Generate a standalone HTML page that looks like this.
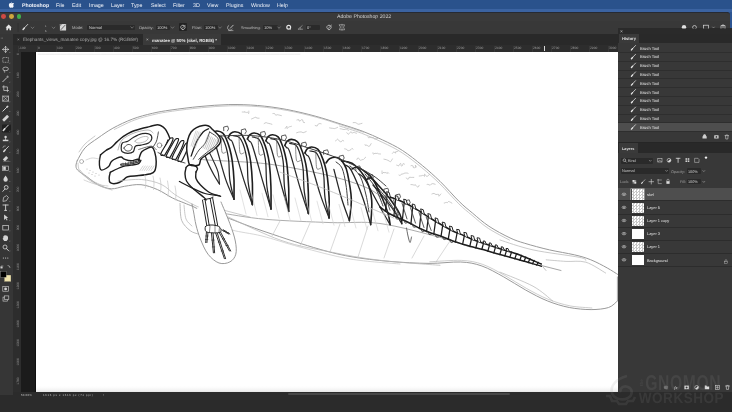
<!DOCTYPE html>
<html><head><meta charset="utf-8">
<style>
*{margin:0;padding:0;box-sizing:border-box}
html,body{width:732px;height:412px;overflow:hidden;background:#2b2b2b;font-family:"Liberation Sans",sans-serif;text-rendering:geometricPrecision}
.a{position:absolute}
.t{position:absolute;white-space:nowrap;will-change:transform}
.ck{background:conic-gradient(#c8c8c8 25%,#fff 0 50%,#c8c8c8 0 75%,#fff 0) 0 0/3px 3px}
</style></head>
<body>
<div class="a" style="left:0px;top:0px;width:732px;height:9px;background:#2a528c;"></div>
<div class="a" style="left:0px;top:9px;width:732px;height:3px;background:#3b63a1;"></div>
<div class="a" style="left:728px;top:12px;width:4px;height:17px;background:#2d5592;"></div>
<div class="a" style="left:0px;top:12px;width:729.5px;height:9px;background:#3a3a3a;border-top:1px solid #262a33;border-top-right-radius:3px"></div>
<div class="a" style="left:0px;top:21px;width:729.5px;height:12.5px;background:#383838;"></div>
<div class="a" style="left:0px;top:33.5px;width:13px;height:362px;background:#363636;"></div>
<div class="a" style="left:13px;top:33.5px;width:605px;height:11.5px;background:#292929;"></div>
<div class="a" style="left:143px;top:33.5px;width:78px;height:11.5px;background:#3a3a3a;"></div>
<div class="a" style="left:13px;top:45px;width:605px;height:7px;background:#2d2d2d;"></div>
<div class="a" style="left:13px;top:52px;width:7.5px;height:340px;background:#2d2d2d;"></div>
<div class="a" style="left:20.5px;top:52px;width:15.5px;height:340px;background:#1b1b1b;"></div>
<div class="a" style="left:36px;top:52px;width:582px;height:340px;background:#ffffff;"></div>
<div class="a" style="left:36px;top:52px;width:582px;height:340px;overflow:hidden"><svg class="a" style="left:-36px;top:-52px" width="732" height="412" viewBox="0 0 732 412" stroke-linecap="round" stroke-linejoin="round"><path d="M77.2,160.8C78.5,158.7 81.4,151.8 84.9,148.0C88.4,144.2 93.3,141.3 98.0,138.0C102.7,134.7 107.1,131.4 112.9,128.2C118.7,125.0 126.1,121.5 132.7,119.0C139.3,116.5 146.1,114.8 152.5,113.3C158.9,111.8 163.1,111.1 171.0,110.0C178.9,108.9 190.4,107.4 200.0,106.5C209.6,105.6 219.2,104.8 228.8,104.6C238.4,104.4 247.9,104.7 257.5,105.5C267.1,106.3 276.7,107.6 286.3,109.4C295.9,111.2 306.2,113.7 315.1,116.1C324.1,118.5 332.2,121.3 340.0,123.8C347.8,126.3 354.9,128.3 362.0,131.0C369.1,133.7 375.9,136.8 382.7,140.0C389.4,143.2 395.9,146.2 402.5,150.5C409.1,154.8 416.1,160.4 422.3,165.5C428.6,170.6 433.8,175.3 440.0,181.3C446.2,187.3 453.9,196.3 459.3,201.6C464.7,206.9 467.6,209.0 472.5,213.1C477.4,217.2 482.8,222.2 489.0,226.3C495.2,230.4 504.0,235.1 510.0,237.9C516.0,240.7 518.2,241.3 524.8,243.3C531.4,245.3 541.2,248.0 549.5,249.9C557.8,251.8 567.4,253.2 574.3,254.8C581.2,256.4 585.3,257.6 590.8,259.8C596.3,262.0 602.8,265.5 607.3,268.0C611.8,270.5 616.2,273.5 618.0,274.6" stroke="#9a9a9a" stroke-width="1.0" fill="none"/><path d="M114.4,129.4C117.7,127.9 127.6,122.7 134.2,120.2C140.8,117.7 147.6,116.0 154.0,114.5C160.4,113.0 164.6,112.3 172.5,111.2C180.4,110.1 191.9,108.6 201.5,107.7C211.1,106.8 220.7,106.0 230.3,105.8C239.9,105.6 249.4,105.9 259.0,106.7C268.6,107.5 278.2,108.8 287.8,110.6C297.4,112.4 307.7,114.9 316.6,117.3C325.6,119.7 333.7,122.5 341.5,125.0C349.3,127.5 359.8,131.0 363.5,132.2" stroke="#b8b8b8" stroke-width="0.75" fill="none"/><path d="M77.2,160.8C77.0,161.5 76.0,163.5 76.0,165.0C76.0,166.5 75.8,168.1 77.5,170.0C79.2,171.9 83.1,174.0 86.5,176.4C89.9,178.8 93.9,182.6 98.0,184.7C102.1,186.8 106.9,188.5 111.3,188.8C115.7,189.1 119.5,187.0 124.5,186.3C129.4,185.6 135.5,184.1 141.0,184.7C146.5,185.2 152.3,187.4 157.5,189.6C162.7,191.8 167.9,195.7 172.3,197.9C176.7,200.1 180.6,201.5 183.9,202.8C187.2,204.2 190.7,205.5 192.0,206.0" stroke="#9a9a9a" stroke-width="1.0" fill="none"/><path d="M80.0,170.0C81.3,171.5 84.7,176.3 88.0,179.0C91.3,181.7 96.0,184.2 100.0,186.0C104.0,187.8 110.0,189.3 112.0,190.0" stroke="#b8b8b8" stroke-width="0.75" fill="none"/><circle cx="81.6" cy="161.5" r="2" stroke="#999" stroke-width="0.7" fill="none"/><circle cx="87" cy="169" r="0.5" fill="#aaa"/><circle cx="90" cy="170.5" r="0.5" fill="#aaa"/><circle cx="93" cy="172" r="0.5" fill="#aaa"/><circle cx="96" cy="173.5" r="0.5" fill="#aaa"/><circle cx="99" cy="175" r="0.5" fill="#aaa"/><circle cx="89" cy="173" r="0.5" fill="#aaa"/><circle cx="92" cy="174.5" r="0.5" fill="#aaa"/><circle cx="95" cy="176" r="0.5" fill="#aaa"/><path d="M192.0,206.0C194.2,207.0 200.0,210.3 205.0,212.0C210.0,213.7 212.9,213.0 222.1,216.0C231.3,219.0 244.8,224.8 260.0,230.0C275.2,235.2 298.6,243.1 313.6,247.5C328.6,251.9 337.4,254.2 350.0,256.5C362.6,258.8 376.2,260.2 389.4,261.4C402.6,262.5 417.1,263.3 429.0,263.4C440.9,263.5 451.9,261.6 460.7,262.0C469.5,262.4 474.7,263.5 481.9,266.0C489.1,268.5 496.4,272.9 503.7,276.9C511.0,280.9 518.3,286.0 525.6,290.0C532.9,294.0 540.1,298.0 547.4,300.9C554.7,303.8 562.0,306.1 569.3,307.5C576.6,308.9 584.5,309.6 591.1,309.6C597.7,309.6 604.2,308.9 608.6,307.5C613.0,306.1 615.9,302.0 617.4,300.9" stroke="#9a9a9a" stroke-width="1.0" fill="none"/><path d="M220.0,212.8C227.6,213.9 247.1,217.7 265.6,219.3C284.1,220.9 311.9,221.9 331.0,222.6C350.1,223.3 361.8,221.0 380.0,223.5C398.2,226.0 425.0,233.5 440.0,237.4C455.0,241.3 465.0,245.4 470.0,247.0" stroke="#9a9a9a" stroke-width="0.8125" fill="none"/><path d="M226.0,216.0C235.3,220.1 264.5,234.7 282.0,240.7C299.5,246.7 314.7,248.8 331.0,252.1C347.3,255.4 361.8,258.1 380.0,260.3C398.2,262.5 430.0,264.5 440.0,265.3" stroke="#b8b8b8" stroke-width="0.75" fill="none"/><path d="M272.0,236.0L280.0,221.0" stroke="#c8c8c8" stroke-width="0.6875" fill="none"/><path d="M300.0,246.0L310.0,223.0" stroke="#c8c8c8" stroke-width="0.6875" fill="none"/><path d="M330.0,252.0L340.0,224.0" stroke="#c8c8c8" stroke-width="0.6875" fill="none"/><path d="M358.0,257.0L368.0,226.0" stroke="#c8c8c8" stroke-width="0.6875" fill="none"/><path d="M384.0,258.0L394.0,229.0" stroke="#c8c8c8" stroke-width="0.6875" fill="none"/><path d="M412.0,258.0L424.0,236.0" stroke="#c8c8c8" stroke-width="0.6875" fill="none"/><path d="M436.0,262.0L450.0,241.0" stroke="#c8c8c8" stroke-width="0.6875" fill="none"/><path d="M197.4,157.4C198.6,157.8 193.7,158.8 204.8,159.8C215.9,160.8 245.8,161.5 263.8,163.5C281.8,165.5 299.5,169.2 313.0,172.0C326.5,174.8 335.5,177.1 345.0,180.0C354.5,182.9 363.2,185.8 370.0,189.3C376.8,192.8 383.3,199.1 386.0,201.0" stroke="#9a9a9a" stroke-width="0.875" fill="none"/><path d="M500.0,240.0C505.5,241.7 519.8,247.0 533.0,249.9C546.2,252.8 570.4,255.5 579.2,257.3C588.0,259.1 584.7,260.1 585.8,260.6" stroke="#b8b8b8" stroke-width="0.75" fill="none"/><path d="M546.2,259.8C549.5,260.1 559.4,261.0 566.0,261.4C572.6,261.8 579.2,260.3 585.8,262.2C592.4,264.1 602.3,271.2 605.6,273.0" stroke="#b8b8b8" stroke-width="0.75" fill="none"/><path d="M500.0,272.1C505.5,274.5 524.2,281.4 533.0,286.2C541.8,291.0 549.5,298.5 552.8,301.0" stroke="#b8b8b8" stroke-width="0.75" fill="none"/><path d="M617.4,276.9L617.4,300.9" stroke="#9a9a9a" stroke-width="0.875" fill="none"/><path d="M100.5,154.8C101.4,154.1 104.1,151.8 105.9,150.5C107.7,149.2 109.6,148.7 111.4,147.3C113.2,145.9 114.9,143.7 116.9,141.9C118.9,140.1 121.0,138.1 123.4,136.4C125.8,134.8 128.2,133.3 131.1,132.0C134.0,130.7 137.8,129.6 140.9,128.7C144.0,127.8 147.1,127.2 149.6,126.6C152.1,126.0 154.4,125.1 156.2,124.9C158.0,124.7 159.1,124.9 160.6,125.5C162.1,126.1 163.7,127.2 165.0,128.7C166.3,130.1 167.3,132.2 168.2,134.2C169.1,136.2 170.2,139.0 170.4,140.8C170.6,142.6 170.2,144.0 169.3,145.1C168.4,146.2 165.7,147.1 165.0,147.5" stroke="#1e1e1e" stroke-width="1.47" fill="none"/><path d="M100.5,154.8C100.3,155.9 99.5,159.2 99.4,161.4C99.3,163.6 99.5,166.6 99.9,168.0C100.3,169.4 100.6,170.0 101.6,170.1C102.6,170.2 104.6,169.2 105.9,168.5C107.2,167.8 108.3,167.0 109.2,165.8C110.1,164.6 110.1,162.7 111.4,161.4C112.7,160.1 115.3,158.8 116.9,158.1C118.5,157.4 119.9,156.8 121.2,157.0C122.5,157.2 122.8,158.6 124.5,159.2C126.2,159.8 128.9,160.8 131.1,160.8C133.3,160.8 136.1,159.3 137.6,159.2C139.1,159.1 139.4,160.1 139.8,160.3" stroke="#1e1e1e" stroke-width="1.4" fill="none"/><path d="M121.2,164.7C122.7,164.5 127.1,164.1 130.0,163.5C132.9,162.9 137.2,161.8 138.7,161.4" stroke="#2a2a2a" stroke-width="2.2399999999999998" fill="none"/><path d="M122.0,164.6C123.3,164.4 127.3,163.9 130.0,163.4C132.7,162.9 136.7,161.8 138.0,161.5" stroke="#e8e8e8" stroke-width="0.625" fill="none"/><path d="M123.0,163.2L123.0,165.3" stroke="#222" stroke-width="0.625" fill="none"/><path d="M125.6,162.7L125.6,164.8" stroke="#222" stroke-width="0.625" fill="none"/><path d="M128.2,162.2L128.2,164.3" stroke="#222" stroke-width="0.625" fill="none"/><path d="M130.8,161.7L130.8,163.8" stroke="#222" stroke-width="0.625" fill="none"/><path d="M133.4,161.2L133.4,163.3" stroke="#222" stroke-width="0.625" fill="none"/><path d="M136.0,160.7L136.0,162.8" stroke="#222" stroke-width="0.625" fill="none"/><path d="M110.3,172.3C110.1,173.2 109.2,176.1 109.2,177.8C109.2,179.5 109.0,181.8 110.3,182.7C111.6,183.6 114.7,183.8 116.9,183.3C119.1,182.9 121.6,181.1 123.4,180.0C125.2,178.9 125.2,177.4 127.8,176.7C130.3,176.0 135.1,176.0 138.7,175.6C142.3,175.2 146.9,174.7 149.6,174.0C152.2,173.3 153.5,173.3 154.6,171.2C155.7,169.1 156.2,164.7 156.2,161.4C156.2,158.1 155.3,154.0 154.6,151.6C153.9,149.2 153.0,147.8 151.8,147.2C150.6,146.6 149.1,147.6 147.5,148.3C145.9,149.0 143.3,150.3 142.0,151.6C140.7,152.9 140.4,154.4 139.8,155.9C139.2,157.4 138.9,159.6 138.7,160.3" stroke="#1e1e1e" stroke-width="1.47" fill="none"/><path d="M110.3,172.3C111.4,171.8 114.7,170.0 116.9,169.0C119.1,168.0 121.0,166.9 123.4,166.3C125.8,165.7 128.6,165.6 131.1,165.2C133.6,164.8 137.1,164.4 138.7,163.6C140.3,162.8 140.5,160.9 140.9,160.3" stroke="#1e1e1e" stroke-width="1.3299999999999998" fill="none"/><path d="M121.2,148.4C121.2,147.0 121.2,144.2 122.3,143.0C123.4,141.8 126.0,142.2 127.8,141.3C129.6,140.4 130.9,138.8 133.3,137.5C135.7,136.2 139.3,134.2 142.0,133.7C144.7,133.1 148.0,133.4 149.6,134.2C151.2,135.0 152.0,137.1 151.8,138.6C151.6,140.1 150.4,141.9 148.6,143.0C146.8,144.1 143.1,144.6 140.9,145.1C138.7,145.6 136.7,145.1 135.4,146.2C134.1,147.3 134.6,150.5 133.3,151.7C132.0,152.9 129.6,153.3 127.8,153.3C126.0,153.3 123.4,152.5 122.3,151.7C121.2,150.9 121.2,149.8 121.2,148.4Z" stroke="#262626" stroke-width="1.19" fill="none"/><path d="M118.0,150.0C118.7,148.3 119.3,142.8 122.0,140.0C124.7,137.2 129.7,134.7 134.0,133.0C138.3,131.3 144.8,130.0 148.0,130.0C151.2,130.0 152.2,132.5 153.0,133.0" stroke="#888" stroke-width="0.625" fill="none"/><path d="M124.0,148.0C124.2,146.9 126.7,144.8 128.0,144.5C129.3,144.2 131.5,145.1 132.0,146.0C132.5,146.9 131.8,149.2 131.0,150.0C130.2,150.8 128.2,151.3 127.0,151.0C125.8,150.7 123.8,149.1 124.0,148.0Z" stroke="#444" stroke-width="0.875" fill="none"/><path d="M135.0,141.0C135.5,140.0 139.8,137.7 142.0,137.0C144.2,136.3 147.3,136.3 148.0,137.0C148.7,137.7 147.5,140.0 146.0,141.0C144.5,142.0 140.8,143.0 139.0,143.0C137.2,143.0 134.5,142.0 135.0,141.0Z" stroke="#999" stroke-width="0.625" fill="none"/><path d="M158.4,132.0C158.2,132.8 157.9,135.3 157.5,137.0C157.1,138.7 157.0,140.2 156.2,141.9C155.4,143.6 153.4,146.4 152.9,147.3" stroke="#333" stroke-width="0.875" fill="none"/><path d="M138.7,149.5C139.8,149.2 142.8,148.1 145.0,147.5C147.2,146.9 149.9,145.9 151.8,146.2C153.7,146.5 155.5,148.9 156.2,149.5" stroke="#444" stroke-width="0.75" fill="none"/><circle cx="159.5" cy="145.3" r="2.4" stroke="#555" stroke-width="0.6" fill="none"/><path d="M140.0,170.5L143.0,166.0" stroke="#bbb" stroke-width="0.625" fill="none"/><path d="M142.2,170.5L145.2,166.0" stroke="#bbb" stroke-width="0.625" fill="none"/><path d="M144.4,170.5L147.4,166.0" stroke="#bbb" stroke-width="0.625" fill="none"/><path d="M146.6,170.5L149.6,166.0" stroke="#bbb" stroke-width="0.625" fill="none"/><path d="M148.8,170.5L151.8,166.0" stroke="#bbb" stroke-width="0.625" fill="none"/><path d="M151.0,170.5L154.0,166.0" stroke="#bbb" stroke-width="0.625" fill="none"/><path d="M165.0,147.5L168.0,140.0" stroke="#1e1e1e" stroke-width="1.26" fill="none"/><path d="M168.7,140.3C170.3,137.7 170.0,138.2 170.7,138.1C171.4,138.0 173.8,137.0 172.9,139.7C172.0,142.4 166.9,151.5 165.3,154.1C163.7,156.7 163.8,155.4 163.1,155.3C162.4,155.2 160.0,156.0 160.9,153.5C161.8,151.0 167.1,142.9 168.7,140.3Z" stroke="#1e1e1e" stroke-width="1.19" fill="#fff"/><path d="M174.2,141.0C175.8,138.2 175.5,138.9 176.2,138.8C176.9,138.7 179.3,137.5 178.4,140.4C177.5,143.3 172.4,153.3 170.8,156.1C169.2,158.9 169.3,157.4 168.6,157.3C167.9,157.2 165.5,158.2 166.4,155.5C167.3,152.8 172.6,143.8 174.2,141.0Z" stroke="#1e1e1e" stroke-width="1.19" fill="#fff"/><path d="M179.6,143.0C181.2,140.2 180.9,140.9 181.6,140.8C182.3,140.7 184.6,139.5 183.8,142.4C183.0,145.3 178.2,155.3 176.6,158.1C175.0,160.9 175.1,159.4 174.4,159.3C173.7,159.2 171.3,160.2 172.2,157.5C173.1,154.8 178.0,145.8 179.6,143.0Z" stroke="#1e1e1e" stroke-width="1.19" fill="#fff"/><path d="M184.6,145.3C186.0,142.6 185.9,143.2 186.6,143.1C187.3,143.0 189.5,141.9 188.8,144.7C188.1,147.5 183.8,157.3 182.3,160.1C180.9,162.9 180.8,161.4 180.1,161.3C179.4,161.2 177.2,162.2 177.9,159.5C178.7,156.8 183.2,148.0 184.6,145.3Z" stroke="#1e1e1e" stroke-width="1.19" fill="#fff"/><path d="M158.0,152.5C158.8,152.9 161.2,154.2 163.0,155.0C164.8,155.8 166.7,156.8 168.5,157.5C170.3,158.2 172.1,158.8 174.0,159.5C175.9,160.2 178.2,160.9 180.0,161.5C181.8,162.1 184.2,162.8 185.0,163.0" stroke="#333" stroke-width="0.875" fill="none"/><path d="M203.0,150.0C203.8,152.2 206.2,158.8 208.0,163.0C209.8,167.2 212.1,171.5 214.0,175.0C215.9,178.5 218.6,182.5 219.5,184.0" stroke="#2a2a2a" stroke-width="1.26" fill="none"/><path d="M207.0,148.0C208.0,150.0 211.2,156.0 213.0,160.0C214.8,164.0 216.9,168.0 218.0,172.0C219.1,176.0 219.2,182.0 219.5,184.0" stroke="#2a2a2a" stroke-width="1.1199999999999999" fill="none"/><path d="M326.0,163.0C326.7,162.2 328.0,159.4 330.0,158.5C332.0,157.6 335.5,156.9 337.8,157.8C340.1,158.7 342.4,161.4 344.0,164.0C345.6,166.6 346.3,167.6 347.5,173.3C348.7,179.1 351.0,190.6 351.3,198.5C351.6,206.4 349.7,217.1 349.4,220.8" stroke="#1e1e1e" stroke-width="1.6099999999999999" fill="none"/><path d="M333.9,169.4C335.2,174.2 339.0,189.9 341.6,198.5C344.2,207.1 348.1,217.1 349.4,220.8" stroke="#262626" stroke-width="1.26" fill="none"/><path d="M336.0,162.0C337.0,163.0 340.3,164.2 342.0,168.0C343.7,171.8 345.0,178.8 346.0,185.0C347.0,191.2 347.7,201.7 348.0,205.0" stroke="#3a3a3a" stroke-width="0.9799999999999999" fill="none"/><path d="M341.6,161.0C342.3,161.1 343.7,160.8 346.0,161.5C348.3,162.2 351.7,162.2 355.2,165.5C358.7,168.8 364.1,175.2 366.8,181.0C369.6,186.8 371.1,193.1 371.7,200.4C372.3,207.7 370.9,220.6 370.7,224.7" stroke="#1e1e1e" stroke-width="1.6099999999999999" fill="none"/><path d="M345.0,165.0C346.1,165.9 348.3,164.8 351.3,170.4C354.3,176.0 359.8,189.4 363.0,198.5C366.2,207.6 369.4,220.3 370.7,224.7" stroke="#262626" stroke-width="1.26" fill="none"/><path d="M350.0,166.0C351.7,167.7 357.3,171.2 360.0,176.0C362.7,180.8 364.5,189.0 366.0,195.0C367.5,201.0 368.5,209.2 369.0,212.0" stroke="#3a3a3a" stroke-width="0.9799999999999999" fill="none"/><path d="M352.0,169.0C352.9,168.7 355.2,166.7 357.2,167.0C359.2,167.3 361.4,169.0 364.0,171.0C366.6,173.0 369.6,174.4 372.7,179.0C375.8,183.6 379.8,192.7 382.4,198.5C385.0,204.3 386.9,209.6 388.2,214.0C389.5,218.4 389.8,222.9 390.1,224.7" stroke="#1e1e1e" stroke-width="1.6099999999999999" fill="none"/><path d="M359.0,174.0C360.0,174.9 361.6,174.4 364.9,179.5C368.1,184.6 374.3,196.8 378.5,204.3C382.7,211.8 388.2,221.3 390.1,224.7" stroke="#262626" stroke-width="1.26" fill="none"/><path d="M365.0,174.0C366.7,176.2 372.0,181.7 375.0,187.0C378.0,192.3 381.7,202.8 383.0,206.0" stroke="#3a3a3a" stroke-width="0.9799999999999999" fill="none"/><path d="M366.0,180.0C366.8,179.7 368.7,177.2 370.7,178.0C372.7,178.8 375.1,181.9 378.0,185.0C380.9,188.1 384.6,191.7 388.2,196.5C391.8,201.3 397.5,209.5 399.8,214.0C402.1,218.5 401.5,222.1 401.8,223.7" stroke="#1e1e1e" stroke-width="1.6099999999999999" fill="none"/><path d="M373.0,185.0C374.2,186.3 376.8,189.2 380.0,193.0C383.2,196.8 388.4,202.9 392.0,208.0C395.6,213.1 400.2,221.1 401.8,223.7" stroke="#262626" stroke-width="1.26" fill="none"/><path d="M378.0,188.0C380.0,190.5 386.7,198.3 390.0,203.0C393.3,207.7 396.7,213.8 398.0,216.0" stroke="#3a3a3a" stroke-width="0.9799999999999999" fill="none"/><path d="M210.2,137.0C210.6,136.3 211.4,133.9 212.5,132.9C213.6,131.9 215.3,130.9 217.0,131.0C218.7,131.1 221.3,131.8 222.8,133.2C224.4,134.6 225.2,136.7 226.4,139.3C227.5,141.9 228.8,145.3 229.8,149.0C230.8,152.7 231.6,156.1 232.3,161.3C233.0,166.5 233.7,174.0 234.0,180.3C234.2,186.6 234.0,196.1 234.0,199.3" stroke="#1e1e1e" stroke-width="1.6099999999999999" fill="none"/><path d="M215.2,135.0C216.2,135.3 219.7,135.4 221.3,136.7C222.8,138.0 223.7,140.3 224.6,142.8C225.6,145.3 226.5,148.4 227.2,151.5C227.8,154.6 228.3,156.5 228.8,161.3C229.3,166.1 229.0,174.0 229.9,180.3C230.8,186.6 233.3,196.1 234.0,199.3" stroke="#262626" stroke-width="1.26" fill="none"/><path d="M210.2,137.0C210.6,137.4 211.3,138.1 212.1,139.2C213.0,140.4 213.1,137.4 215.3,144.0C217.6,150.6 222.4,169.7 225.5,178.9C228.6,188.1 232.6,195.9 234.0,199.3" stroke="#2a2a2a" stroke-width="1.26" fill="none"/><path d="M221.0,135.0C221.2,137.8 221.2,149.2 222.0,152.0C222.8,154.8 225.3,152.0 226.0,152.0" stroke="#666" stroke-width="0.75" fill="none"/><path d="M228.2,137.7C228.6,137.0 229.4,134.6 230.5,133.6C231.6,132.6 233.2,131.6 235.0,131.7C236.8,131.8 239.4,132.5 241.0,133.9C242.6,135.3 243.4,137.4 244.6,140.0C245.8,142.6 247.1,146.0 248.1,149.7C249.1,153.4 250.0,156.4 250.7,162.0C251.4,167.6 252.1,176.2 252.4,183.3C252.6,190.5 252.4,201.1 252.4,204.7" stroke="#1e1e1e" stroke-width="1.6099999999999999" fill="none"/><path d="M233.2,135.7C234.2,136.0 237.8,136.1 239.4,137.4C241.0,138.7 241.9,141.0 242.9,143.5C243.9,146.0 244.8,149.1 245.5,152.2C246.2,155.3 246.7,156.8 247.2,162.0C247.7,167.2 247.4,176.2 248.3,183.3C249.2,190.5 251.7,201.1 252.4,204.7" stroke="#262626" stroke-width="1.26" fill="none"/><path d="M228.2,137.7C228.6,138.1 229.3,138.8 230.1,139.9C231.0,141.1 231.1,138.1 233.3,144.7C235.6,151.3 240.5,169.6 243.7,179.6C246.9,189.6 250.9,200.5 252.4,204.7" stroke="#2a2a2a" stroke-width="1.26" fill="none"/><path d="M239.0,135.7C239.2,138.5 239.2,149.9 240.0,152.7C240.8,155.5 243.3,152.7 244.0,152.7" stroke="#666" stroke-width="0.75" fill="none"/><path d="M247.4,139.0C247.8,138.3 248.6,135.9 249.7,134.9C250.8,133.9 252.5,132.9 254.2,133.0C255.9,133.1 258.4,133.8 260.0,135.2C261.5,136.6 262.3,138.7 263.4,141.3C264.6,143.9 265.8,147.3 266.8,151.0C267.8,154.7 268.6,157.4 269.3,163.3C270.0,169.2 270.7,178.6 270.9,186.2C271.2,193.8 271.0,205.3 271.0,209.1" stroke="#1e1e1e" stroke-width="1.6099999999999999" fill="none"/><path d="M252.4,137.0C253.4,137.3 256.8,137.4 258.4,138.7C259.9,140.0 260.7,142.3 261.7,144.8C262.7,147.3 263.5,150.4 264.2,153.5C264.9,156.6 265.3,157.9 265.8,163.3C266.3,168.8 266.0,178.6 266.9,186.2C267.8,193.8 270.3,205.3 271.0,209.1" stroke="#262626" stroke-width="1.26" fill="none"/><path d="M247.4,139.0C247.8,139.4 248.5,140.1 249.3,141.2C250.2,142.4 250.3,139.4 252.5,146.0C254.8,152.6 259.5,170.4 262.6,180.9C265.7,191.4 269.6,204.4 271.0,209.1" stroke="#2a2a2a" stroke-width="1.26" fill="none"/><path d="M258.2,137.0C258.4,139.8 258.4,151.2 259.2,154.0C260.0,156.8 262.5,154.0 263.2,154.0" stroke="#666" stroke-width="0.75" fill="none"/><path d="M265.9,140.7C266.2,140.0 267.0,137.6 268.1,136.6C269.2,135.6 270.9,134.6 272.6,134.7C274.3,134.8 276.6,135.5 278.1,136.9C279.6,138.3 280.3,140.4 281.4,143.0C282.5,145.6 283.7,149.0 284.6,152.7C285.5,156.4 286.3,159.1 287.0,165.0C287.7,170.9 288.4,180.5 288.7,188.2C288.9,195.9 288.7,207.5 288.7,211.4" stroke="#1e1e1e" stroke-width="1.6099999999999999" fill="none"/><path d="M270.8,138.7C271.8,139.0 275.1,139.1 276.5,140.4C278.0,141.7 278.7,144.0 279.7,146.5C280.6,149.0 281.3,152.1 282.0,155.2C282.6,158.3 283.1,159.5 283.5,165.0C283.9,170.5 283.7,180.5 284.6,188.2C285.5,195.9 288.0,207.5 288.7,211.4" stroke="#262626" stroke-width="1.26" fill="none"/><path d="M265.9,140.7C266.2,141.1 266.9,141.8 267.7,142.9C268.6,144.1 268.8,141.1 271.0,147.7C273.1,154.3 277.7,172.0 280.6,182.6C283.6,193.2 287.4,206.6 288.7,211.4" stroke="#2a2a2a" stroke-width="1.26" fill="none"/><path d="M276.6,138.7C276.8,141.5 276.8,152.9 277.6,155.7C278.4,158.5 280.9,155.7 281.6,155.7" stroke="#666" stroke-width="0.75" fill="none"/><path d="M284.8,145.4C285.1,144.7 285.9,142.3 287.0,141.3C288.1,140.3 289.8,139.3 291.5,139.4C293.2,139.5 295.8,140.2 297.3,141.6C298.9,143.0 299.6,145.1 300.8,147.7C301.9,150.3 303.2,153.7 304.2,157.4C305.2,161.1 306.0,164.0 306.7,169.7C307.4,175.4 308.1,184.3 308.3,191.7C308.6,199.0 308.4,209.9 308.4,213.6" stroke="#1e1e1e" stroke-width="1.6099999999999999" fill="none"/><path d="M289.7,143.4C290.7,143.7 294.2,143.8 295.7,145.1C297.3,146.4 298.1,148.7 299.1,151.2C300.1,153.7 300.9,156.8 301.6,159.9C302.3,163.0 302.7,164.4 303.2,169.7C303.7,175.0 303.4,184.3 304.3,191.7C305.2,199.0 307.7,209.9 308.4,213.6" stroke="#262626" stroke-width="1.26" fill="none"/><path d="M284.8,145.4C285.1,145.8 285.8,146.5 286.6,147.7C287.5,148.8 287.6,145.8 289.9,152.4C292.1,159.0 296.9,177.1 299.9,187.3C303.0,197.5 307.0,209.2 308.4,213.6" stroke="#2a2a2a" stroke-width="1.26" fill="none"/><path d="M295.5,143.4C295.7,146.2 295.7,157.6 296.5,160.4C297.3,163.2 299.8,160.4 300.5,160.4" stroke="#666" stroke-width="0.75" fill="none"/><path d="M304.9,153.0C305.3,152.3 306.1,149.9 307.2,148.9C308.3,147.9 309.9,146.9 311.7,147.0C313.4,147.1 316.1,147.8 317.7,149.2C319.3,150.6 320.1,152.7 321.3,155.3C322.5,157.9 323.8,161.3 324.8,165.0C325.8,168.7 326.7,171.9 327.4,177.3C328.1,182.7 328.8,190.9 329.1,197.7C329.3,204.4 329.1,214.6 329.1,218.0" stroke="#1e1e1e" stroke-width="1.6099999999999999" fill="none"/><path d="M309.9,151.0C310.9,151.3 314.5,151.4 316.1,152.7C317.7,154.0 318.6,156.3 319.6,158.8C320.6,161.3 321.5,164.4 322.2,167.5C322.9,170.6 323.4,172.3 323.9,177.3C324.4,182.3 324.1,190.9 325.0,197.7C325.9,204.4 328.4,214.6 329.1,218.0" stroke="#262626" stroke-width="1.26" fill="none"/><path d="M304.9,153.0C305.3,153.4 306.0,154.1 306.8,155.2C307.7,156.4 307.8,153.4 310.1,160.0C312.3,166.6 317.2,185.2 320.4,194.9C323.6,204.6 327.7,214.2 329.1,218.0" stroke="#2a2a2a" stroke-width="1.26" fill="none"/><path d="M315.7,151.0C315.9,153.8 315.9,165.2 316.7,168.0C317.5,170.8 320.0,168.0 320.7,168.0" stroke="#666" stroke-width="0.75" fill="none"/><path d="M223.8,130.7 L223.6,127.1 L227.6,126.1 L228.6,128.9 L227.4,130.9" stroke="#333" stroke-width="0.8" fill="none"/><path d="M241.5,133.4 L241.3,129.8 L245.3,128.8 L246.3,131.6 L245.1,133.6" stroke="#333" stroke-width="0.8" fill="none"/><path d="M260.8,136.0 L260.6,132.4 L264.6,131.4 L265.6,134.2 L264.4,136.2" stroke="#333" stroke-width="0.8" fill="none"/><path d="M281.7,139.5 L281.5,135.9 L285.5,134.9 L286.5,137.7 L285.3,139.7" stroke="#333" stroke-width="0.8" fill="none"/><path d="M301.8,146.7 L301.6,143.1 L305.6,142.1 L306.6,144.9 L305.4,146.9" stroke="#333" stroke-width="0.8" fill="none"/><path d="M323.7,154.4 L323.5,150.8 L327.5,149.8 L328.5,152.6 L327.3,154.6" stroke="#333" stroke-width="0.8" fill="none"/><path d="M339.4,159.8 L339.2,156.2 L343.2,155.2 L344.2,158.0 L343.0,160.0" stroke="#333" stroke-width="0.8" fill="none"/><path d="M355.9,170.5 L355.7,166.9 L359.7,165.9 L360.7,168.7 L359.5,170.7" stroke="#333" stroke-width="0.8" fill="none"/><path d="M368.5,179.2 L368.3,175.6 L372.3,174.6 L373.3,177.4 L372.1,179.4" stroke="#333" stroke-width="0.8" fill="none"/><path d="M384.0,192.8 L383.8,189.2 L387.8,188.2 L388.8,191.0 L387.6,193.0" stroke="#333" stroke-width="0.8" fill="none"/><path d="M395.7,198.6 L395.5,195.0 L399.5,194.0 L400.5,196.8 L399.3,198.8" stroke="#333" stroke-width="0.8" fill="none"/><path d="M405.4,204.4 L405.2,200.8 L409.2,199.8 L410.2,202.6 L409.0,204.6" stroke="#333" stroke-width="0.8" fill="none"/><path d="M280.0,172.1C288.3,175.2 311.1,183.3 330.0,191.0C348.9,198.7 383.0,213.5 393.6,218.0" stroke="#b8b8b8" stroke-width="0.75" fill="none"/><path d="M390.0,197.0C392.5,198.0 400.0,200.6 405.0,203.0C410.0,205.4 415.7,208.9 420.0,211.5C424.3,214.1 427.2,216.2 430.9,218.5C434.5,220.8 438.2,222.9 441.9,225.0C445.5,227.1 449.2,229.2 452.8,231.0C456.4,232.8 460.1,233.9 463.7,235.5C467.3,237.1 471.0,238.9 474.6,240.3C478.2,241.7 481.4,242.6 485.6,244.0C489.8,245.4 494.3,246.9 500.0,248.7C505.7,250.5 512.9,252.4 519.8,255.0C526.7,257.6 537.7,262.5 541.3,264.0" stroke="#1e1e1e" stroke-width="1.54" fill="none"/><path d="M380.0,207.0C381.7,208.2 385.6,211.6 390.0,214.0C394.4,216.4 401.5,219.1 406.5,221.5C411.5,223.9 415.9,226.6 420.0,228.5C424.1,230.4 427.2,231.7 430.9,233.0C434.5,234.3 438.2,235.2 441.9,236.5C445.5,237.8 449.2,239.7 452.8,241.0C456.4,242.3 460.1,243.4 463.7,244.5C467.3,245.6 471.0,246.5 474.6,247.5C478.2,248.5 481.4,249.1 485.6,250.3C489.8,251.5 494.3,252.9 500.0,254.5C505.7,256.1 512.9,258.1 519.8,260.0C526.7,261.9 537.7,265.2 541.3,266.2" stroke="#1e1e1e" stroke-width="1.54" fill="none"/><path d="M387.2,194.2L385.4,211.2" stroke="#1e1e1e" stroke-width="1.26" fill="none"/><path d="M387.6,195.3 L386.6,191.7 L389.2,192.5 L390.4,197.2" stroke="#1e1e1e" stroke-width="0.95" fill="#fff" stroke-linejoin="miter"/><path d="M387.0,211.2C387.2,211.7 387.5,213.7 388.0,214.2C388.5,214.7 389.7,214.0 390.0,214.0" stroke="#333" stroke-width="0.875" fill="none"/><path d="M385.0,195.2L390.0,210.2" stroke="#444" stroke-width="0.875" fill="none"/><path d="M395.7,198.8L393.9,216.0" stroke="#1e1e1e" stroke-width="1.26" fill="none"/><path d="M396.1,199.4 L395.1,195.8 L397.7,196.2 L398.9,200.6" stroke="#1e1e1e" stroke-width="0.95" fill="#fff" stroke-linejoin="miter"/><path d="M395.5,216.0C395.7,216.5 396.0,218.6 396.5,219.0C397.0,219.5 398.2,218.9 398.5,218.8" stroke="#333" stroke-width="0.875" fill="none"/><path d="M393.5,199.8L398.5,215.0" stroke="#444" stroke-width="0.875" fill="none"/><path d="M404.2,202.2L402.4,219.9" stroke="#1e1e1e" stroke-width="1.26" fill="none"/><path d="M404.6,202.8 L403.6,199.2 L406.2,199.8 L407.4,204.4" stroke="#1e1e1e" stroke-width="0.95" fill="#fff" stroke-linejoin="miter"/><path d="M404.0,219.9C404.2,220.4 404.5,222.4 405.0,222.9C405.5,223.4 406.7,222.7 407.0,222.7" stroke="#333" stroke-width="0.875" fill="none"/><path d="M402.0,203.2L407.0,218.9" stroke="#444" stroke-width="0.875" fill="none"/><path d="M412.7,206.7L410.9,224.1" stroke="#1e1e1e" stroke-width="1.26" fill="none"/><path d="M413.1,207.6 L412.1,204.0 L414.7,204.6 L415.9,209.2" stroke="#1e1e1e" stroke-width="0.95" fill="#fff" stroke-linejoin="miter"/><path d="M412.5,224.1C412.7,224.6 413.0,226.6 413.5,227.1C414.0,227.6 415.2,226.9 415.5,226.9" stroke="#333" stroke-width="0.875" fill="none"/><path d="M410.5,207.7L415.5,223.1" stroke="#444" stroke-width="0.875" fill="none"/><path d="M421.2,211.5L419.4,228.5" stroke="#1e1e1e" stroke-width="1.26" fill="none"/><path d="M421.6,212.5 L420.6,208.9 L423.2,209.7 L424.4,214.3" stroke="#1e1e1e" stroke-width="0.95" fill="#fff" stroke-linejoin="miter"/><path d="M421.0,228.5C421.2,229.0 421.5,231.0 422.0,231.5C422.5,232.0 423.7,231.3 424.0,231.3" stroke="#333" stroke-width="0.875" fill="none"/><path d="M419.0,212.5L424.0,227.5" stroke="#444" stroke-width="0.875" fill="none"/><path d="M428.4,216.1L426.6,231.5" stroke="#1e1e1e" stroke-width="1.26" fill="none"/><path d="M428.8,217.2 L427.8,213.6 L430.4,214.3 L431.6,218.9" stroke="#1e1e1e" stroke-width="0.95" fill="#fff" stroke-linejoin="miter"/><path d="M428.2,231.5C428.4,232.0 428.7,234.0 429.2,234.5C429.7,234.9 430.9,234.3 431.2,234.3" stroke="#333" stroke-width="0.875" fill="none"/><path d="M426.2,217.1L431.2,230.5" stroke="#444" stroke-width="0.875" fill="none"/><path d="M435.6,220.6L433.8,234.1" stroke="#1e1e1e" stroke-width="1.26" fill="none"/><path d="M436.0,221.5 L435.0,217.9 L437.6,218.6 L438.8,223.2" stroke="#1e1e1e" stroke-width="0.95" fill="#fff" stroke-linejoin="miter"/><path d="M435.4,234.1C435.6,234.6 435.9,236.6 436.4,237.1C436.9,237.6 438.1,236.9 438.4,236.9" stroke="#333" stroke-width="0.875" fill="none"/><path d="M442.8,224.8L441.0,236.4" stroke="#1e1e1e" stroke-width="1.26" fill="none"/><path d="M443.2,225.7 L442.2,222.1 L444.8,222.7 L446.0,227.3" stroke="#1e1e1e" stroke-width="0.95" fill="#fff" stroke-linejoin="miter"/><path d="M442.6,236.4C442.8,236.9 443.1,238.9 443.6,239.4C444.1,239.9 445.3,239.2 445.6,239.2" stroke="#333" stroke-width="0.875" fill="none"/><path d="M450.0,228.8L448.2,239.3" stroke="#1e1e1e" stroke-width="1.26" fill="none"/><path d="M450.4,229.7 L449.4,226.1 L452.0,226.7 L453.2,231.2" stroke="#1e1e1e" stroke-width="0.95" fill="#fff" stroke-linejoin="miter"/><path d="M449.8,239.3C450.0,239.8 450.3,241.9 450.8,242.3C451.3,242.8 452.5,242.2 452.8,242.1" stroke="#333" stroke-width="0.875" fill="none"/><path d="M457.2,232.3L455.4,242.0" stroke="#1e1e1e" stroke-width="1.26" fill="none"/><path d="M457.6,233.0 L456.6,229.4 L459.2,229.7 L460.4,234.1" stroke="#1e1e1e" stroke-width="0.95" fill="#fff" stroke-linejoin="miter"/><path d="M464.4,235.3L462.6,244.3" stroke="#1e1e1e" stroke-width="1.26" fill="none"/><path d="M464.8,236.0 L463.8,232.4 L466.4,232.8 L467.6,237.2" stroke="#1e1e1e" stroke-width="0.95" fill="#fff" stroke-linejoin="miter"/><path d="M471.6,238.5L469.8,246.3" stroke="#1e1e1e" stroke-width="1.26" fill="none"/><path d="M472.0,239.2 L471.0,235.6 L473.6,236.0 L474.8,240.4" stroke="#1e1e1e" stroke-width="0.95" fill="#fff" stroke-linejoin="miter"/><path d="M477.6,240.9L475.8,248.0" stroke="#1e1e1e" stroke-width="1.26" fill="none"/><path d="M478.0,241.4 L477.0,237.8 L479.6,238.1 L480.8,242.4" stroke="#1e1e1e" stroke-width="0.95" fill="#fff" stroke-linejoin="miter"/><path d="M483.6,242.9L481.8,249.5" stroke="#1e1e1e" stroke-width="1.26" fill="none"/><path d="M484.0,243.5 L483.0,241.1 L485.0,241.1 L486.2,244.2" stroke="#1e1e1e" stroke-width="0.95" fill="#fff" stroke-linejoin="miter"/><path d="M489.6,244.9L487.8,251.1" stroke="#1e1e1e" stroke-width="1.26" fill="none"/><path d="M490.0,245.4 L489.0,243.0 L491.0,243.1 L492.2,246.2" stroke="#1e1e1e" stroke-width="0.95" fill="#fff" stroke-linejoin="miter"/><path d="M495.6,246.9L493.8,252.9" stroke="#1e1e1e" stroke-width="1.26" fill="none"/><path d="M496.0,247.4 L495.0,245.0 L497.0,245.0 L498.2,248.1" stroke="#1e1e1e" stroke-width="0.95" fill="#fff" stroke-linejoin="miter"/><path d="M501.6,248.8L499.8,254.6" stroke="#1e1e1e" stroke-width="1.26" fill="none"/><path d="M502.0,249.3 L501.0,246.9 L503.0,247.0 L504.2,250.0" stroke="#1e1e1e" stroke-width="0.95" fill="#fff" stroke-linejoin="miter"/><path d="M506.6,250.4L504.8,256.0" stroke="#1e1e1e" stroke-width="1.26" fill="none"/><path d="M507.0,250.9 L506.0,248.5 L508.0,248.5 L509.2,251.6" stroke="#1e1e1e" stroke-width="0.95" fill="#fff" stroke-linejoin="miter"/><path d="M511.6,252.0L509.8,257.4" stroke="#1e1e1e" stroke-width="1.26" fill="none"/><path d="M516.6,253.6L514.8,258.8" stroke="#1e1e1e" stroke-width="1.26" fill="none"/><path d="M521.6,255.3L519.8,260.2" stroke="#1e1e1e" stroke-width="1.26" fill="none"/><path d="M525.8,257.0L524.0,261.4" stroke="#1e1e1e" stroke-width="1.26" fill="none"/><path d="M530.0,258.8L528.2,262.6" stroke="#1e1e1e" stroke-width="1.26" fill="none"/><path d="M534.2,260.5L532.4,263.8" stroke="#1e1e1e" stroke-width="1.26" fill="none"/><path d="M538.4,262.3L536.6,265.0" stroke="#1e1e1e" stroke-width="1.26" fill="none"/><path d="M541.3,265.5L561.0,270.5" stroke="#888" stroke-width="0.75" fill="none"/><path d="M543.0,267.0L546.0,270.5" stroke="#888" stroke-width="0.5" fill="none"/><path d="M406.5,228.0C406.8,229.3 407.4,233.6 408.0,236.0C408.6,238.4 409.4,242.3 410.0,242.5C410.6,242.7 411.2,237.9 411.5,237.0" stroke="#555" stroke-width="0.875" fill="none"/><path d="M187.8,139.7C188.5,137.0 189.7,134.0 191.1,132.0C192.5,130.0 194.5,128.8 196.5,127.7C198.5,126.6 201.1,125.8 203.1,125.5C205.1,125.2 207.0,125.3 208.6,126.0C210.2,126.7 211.3,128.2 212.9,129.8C214.5,131.4 217.1,133.7 218.4,135.3C219.7,137.0 220.4,138.2 220.6,139.7C220.8,141.1 220.6,142.4 219.5,144.0C218.4,145.6 216.2,147.7 214.0,149.5C211.8,151.3 208.6,153.4 206.4,155.0C204.2,156.6 202.2,157.6 200.9,159.3C199.6,161.0 200.5,164.1 198.7,165.0C196.9,165.9 191.8,166.3 190.0,165.0C188.2,163.7 188.4,160.0 187.8,157.2C187.2,154.4 186.7,151.3 186.7,148.4C186.7,145.5 187.1,142.4 187.8,139.7Z" stroke="#1e1e1e" stroke-width="1.47" fill="#fff"/><path d="M191.1,156.1C192.0,153.7 194.5,145.9 196.5,141.9C198.5,137.9 201.1,134.2 203.1,132.0C205.1,129.8 207.7,129.2 208.6,128.7" stroke="#1e1e1e" stroke-width="1.26" fill="none"/><path d="M193.3,159.3C194.2,157.8 197.0,152.7 199.0,150.0C201.0,147.3 203.5,146.0 205.3,143.0C207.1,140.0 208.9,133.8 209.6,132.0" stroke="#333" stroke-width="0.875" fill="none"/><path d="M209.6,132.0C210.7,132.7 214.7,134.9 216.2,136.4C217.7,137.9 218.6,139.2 218.4,140.8C218.2,142.4 217.1,144.2 215.1,146.2C213.1,148.2 209.1,150.6 206.4,152.8C203.7,155.0 200.0,158.2 198.7,159.3" stroke="#333" stroke-width="0.9375" fill="none"/><path d="M208.0,135.0L203.0,148.0" stroke="#a0a0a0" stroke-width="0.5625" fill="none"/><path d="M209.6,135.9L204.6,148.7" stroke="#a0a0a0" stroke-width="0.5625" fill="none"/><path d="M211.2,136.8L206.2,149.4" stroke="#a0a0a0" stroke-width="0.5625" fill="none"/><path d="M212.8,137.7L207.8,150.1" stroke="#a0a0a0" stroke-width="0.5625" fill="none"/><path d="M214.4,138.6L209.4,150.8" stroke="#a0a0a0" stroke-width="0.5625" fill="none"/><path d="M216.0,139.5L211.0,151.5" stroke="#a0a0a0" stroke-width="0.5625" fill="none"/><path d="M217.6,140.4L212.6,152.2" stroke="#a0a0a0" stroke-width="0.5625" fill="none"/><path d="M196.0,131.0L191.0,146.0" stroke="#b8b8b8" stroke-width="0.5625" fill="none"/><path d="M197.5,131.5L192.5,146.5" stroke="#b8b8b8" stroke-width="0.5625" fill="none"/><path d="M199.0,132.0L194.0,147.0" stroke="#b8b8b8" stroke-width="0.5625" fill="none"/><path d="M200.5,132.5L195.5,147.5" stroke="#b8b8b8" stroke-width="0.5625" fill="none"/><path d="M186.0,167.5C186.5,167.1 187.6,165.3 189.0,165.0C190.4,164.7 193.1,164.9 194.5,165.5C195.9,166.1 197.2,167.4 197.5,168.5C197.8,169.6 196.2,171.4 196.0,172.0" stroke="#1e1e1e" stroke-width="1.4" fill="none"/><path d="M186.0,168.0C185.8,169.0 184.9,171.8 185.0,174.0C185.1,176.2 185.2,178.6 186.5,181.0C187.8,183.4 190.1,185.8 193.0,188.5C195.9,191.2 201.8,195.6 204.0,197.5C206.2,199.4 205.7,199.6 206.0,200.0" stroke="#1e1e1e" stroke-width="1.4" fill="none"/><path d="M196.0,172.0C196.0,173.1 195.2,176.3 196.0,178.5C196.8,180.7 198.2,182.7 200.5,185.0C202.8,187.3 206.2,190.6 209.5,192.5C212.8,194.4 218.8,195.7 220.6,196.3" stroke="#1e1e1e" stroke-width="1.4" fill="none"/><path d="M179.4,181.5C181.5,182.6 187.7,186.0 192.0,188.0C196.3,190.0 200.5,192.2 205.0,193.5C209.5,194.8 216.7,195.2 219.0,195.5" stroke="#1e1e1e" stroke-width="1.26" fill="none"/><path d="M204.0,199.5C205.0,199.3 208.5,198.9 210.0,198.5C211.5,198.1 212.5,197.2 213.0,197.0" stroke="#1e1e1e" stroke-width="1.1199999999999999" fill="none"/><path d="M180.0,203.5C180.3,206.3 180.0,216.0 181.7,220.5C183.4,225.0 187.4,228.4 190.2,230.7C193.0,233.0 197.3,233.5 198.7,234.1" stroke="#b8b8b8" stroke-width="0.9375" fill="none"/><path d="M184.0,205.0C184.3,207.3 184.7,215.5 186.0,219.0C187.3,222.5 191.0,224.8 192.0,226.0" stroke="#b8b8b8" stroke-width="0.75" fill="none"/><path d="M224.2,210.3L250.0,217.1" stroke="#b8b8b8" stroke-width="0.75" fill="none"/><path d="M144.8,175.0C145.0,176.1 145.7,179.3 145.8,181.5C145.9,183.7 145.4,186.9 145.3,188.0" stroke="#c8c8c8" stroke-width="0.75" fill="none"/><path d="M153.0,176.0C153.2,177.1 153.9,180.5 154.0,182.8C154.1,185.0 153.6,188.4 153.5,189.5" stroke="#c8c8c8" stroke-width="0.75" fill="none"/><path d="M160.0,178.0C160.2,179.2 160.9,182.7 161.0,185.0C161.1,187.3 160.6,190.8 160.5,192.0" stroke="#c8c8c8" stroke-width="0.75" fill="none"/><path d="M167.5,181.0C167.7,182.2 168.4,186.0 168.5,188.5C168.6,191.0 168.1,194.8 168.0,196.0" stroke="#c8c8c8" stroke-width="0.75" fill="none"/><path d="M175.0,186.0C175.2,187.2 175.9,190.7 176.0,193.0C176.1,195.3 175.6,198.8 175.5,200.0" stroke="#c8c8c8" stroke-width="0.75" fill="none"/><path d="M118.0,181.0C121.9,180.8 134.3,178.9 141.5,179.5C148.7,180.1 155.8,181.9 161.3,184.4C166.8,186.9 170.4,191.6 174.5,194.3C178.6,197.1 181.9,198.7 186.0,200.9C190.1,203.1 195.3,205.6 199.2,207.5C203.0,209.4 207.4,211.7 209.1,212.5" stroke="#b8b8b8" stroke-width="0.75" fill="none"/><path d="M79.0,152.0C80.0,150.7 82.3,146.7 85.0,144.0C87.7,141.3 93.3,137.3 95.0,136.0" stroke="#b8b8b8" stroke-width="0.75" fill="none"/><path d="M86.0,160.0C87.0,159.7 89.8,158.2 92.0,158.0C94.2,157.8 97.8,158.8 99.0,159.0" stroke="#c8c8c8" stroke-width="0.75" fill="none"/><path d="M84.0,180.0C85.8,180.7 91.0,183.0 95.0,184.0C99.0,185.0 105.8,185.7 108.0,186.0" stroke="#c8c8c8" stroke-width="0.75" fill="none"/><path d="M221.0,136.0C225.8,135.9 240.2,134.9 250.0,135.5C259.8,136.1 270.0,137.3 280.0,139.5C290.0,141.7 300.0,145.2 310.0,148.5C320.0,151.8 329.9,154.8 340.0,159.0C350.1,163.2 362.8,169.5 370.5,174.0C378.2,178.5 383.4,184.0 386.0,186.0" stroke="#3a3a3a" stroke-width="0.9799999999999999" fill="none"/><path d="M251.5,119.0C251.8,118.9 252.3,118.6 253.1,118.3C253.8,117.9 255.4,117.2 255.9,117.1C256.4,117.0 255.8,117.6 256.1,117.7C256.4,117.9 257.4,118.1 257.9,118.2C258.4,118.2 258.9,118.2 259.1,118.2" stroke="#b4b4b4" stroke-width="0.6875" fill="none"/><path d="M272.9,113.6C273.2,113.6 274.1,113.3 274.6,113.6C275.1,113.8 275.3,115.0 275.7,115.2C276.1,115.4 276.6,114.7 277.3,114.7C277.9,114.7 278.9,115.1 279.6,115.2C280.3,115.4 281.1,115.5 281.4,115.6" stroke="#b4b4b4" stroke-width="0.6875" fill="none"/><path d="M264.1,123.6C264.4,123.4 265.5,122.7 266.0,122.6C266.5,122.5 266.6,122.9 267.3,123.1C268.0,123.3 269.6,123.6 270.4,123.8C271.1,124.0 271.6,124.2 271.9,124.3" stroke="#b4b4b4" stroke-width="0.6875" fill="none"/><path d="M296.9,120.0C297.2,119.9 298.4,119.5 298.8,119.7C299.2,119.8 298.8,120.8 299.1,121.0C299.3,121.2 299.8,121.1 300.2,120.8C300.7,120.6 301.3,119.8 301.7,119.6C302.1,119.5 302.3,119.5 302.6,119.9C302.9,120.4 303.1,122.0 303.4,122.4C303.7,122.8 304.4,122.5 304.6,122.5" stroke="#b4b4b4" stroke-width="0.6875" fill="none"/><path d="M296.6,132.8C296.9,132.7 297.7,132.4 298.4,132.2C299.2,132.1 300.4,131.8 301.2,131.9C301.9,131.9 302.3,132.7 303.2,132.7C304.0,132.6 305.7,131.7 306.2,131.5" stroke="#b4b4b4" stroke-width="0.6875" fill="none"/><path d="M315.2,125.5C315.5,125.6 316.8,126.2 317.2,126.0C317.6,125.9 317.2,125.1 317.7,124.6C318.1,124.2 319.3,123.6 319.8,123.5C320.4,123.4 320.9,123.9 321.1,123.9" stroke="#b4b4b4" stroke-width="0.6875" fill="none"/><path d="M329.6,127.9C330.0,128.0 331.5,128.2 332.4,128.3C333.2,128.4 334.2,128.6 334.7,128.6C335.2,128.6 335.0,128.5 335.5,128.3C336.0,128.1 337.3,127.6 337.6,127.4" stroke="#b4b4b4" stroke-width="0.6875" fill="none"/><path d="M346.9,132.7C347.2,133.0 347.8,134.4 348.4,134.2C349.0,134.1 350.3,132.2 350.7,131.9C351.1,131.5 350.5,132.0 350.8,132.1C351.1,132.3 351.7,132.9 352.2,133.0C352.8,133.0 353.8,132.3 354.2,132.2C354.6,132.2 354.2,132.6 354.6,132.7C355.0,132.9 356.2,133.1 356.5,133.2" stroke="#b4b4b4" stroke-width="0.6875" fill="none"/><path d="M335.6,141.0C336.0,140.7 337.0,139.1 337.7,139.2C338.3,139.3 339.1,141.1 339.8,141.5C340.4,141.9 341.0,141.8 341.5,141.6C341.9,141.3 342.1,140.4 342.5,140.3C342.8,140.2 343.5,140.9 343.7,141.0" stroke="#b4b4b4" stroke-width="0.6875" fill="none"/><path d="M364.9,144.8C364.9,144.9 364.9,145.3 365.2,145.3C365.5,145.4 366.2,145.0 366.9,145.2C367.5,145.4 368.5,146.7 369.2,146.4C369.9,146.2 370.8,144.1 371.1,143.6" stroke="#b4b4b4" stroke-width="0.6875" fill="none"/><path d="M344.6,148.9C344.9,149.0 346.1,148.9 346.6,149.3C347.2,149.6 347.2,150.8 348.0,150.8C348.7,150.9 350.4,150.0 351.0,149.6C351.7,149.2 351.6,148.4 351.9,148.4C352.2,148.3 352.8,149.1 353.0,149.2" stroke="#b4b4b4" stroke-width="0.6875" fill="none"/><path d="M372.9,152.8C372.9,153.0 373.0,154.1 373.4,154.1C373.7,154.2 374.3,153.4 375.0,153.3C375.6,153.2 376.7,153.6 377.2,153.5C377.6,153.5 377.3,153.1 377.5,153.2C377.7,153.2 378.0,153.7 378.5,153.8C379.0,153.9 380.2,154.0 380.5,154.0" stroke="#b4b4b4" stroke-width="0.6875" fill="none"/><path d="M356.9,159.6C357.1,159.3 357.5,157.7 358.1,157.8C358.7,157.9 359.7,159.9 360.4,160.3C361.0,160.6 361.5,159.8 362.0,159.7C362.5,159.5 363.1,159.6 363.4,159.5C363.8,159.3 363.6,159.1 364.0,158.8C364.4,158.4 365.4,157.5 365.7,157.2" stroke="#b4b4b4" stroke-width="0.6875" fill="none"/><path d="M383.9,159.2C384.3,159.3 385.5,159.4 386.4,159.7C387.2,160.0 388.3,160.6 389.0,160.9C389.7,161.3 390.0,162.0 390.5,161.7C391.1,161.4 392.1,159.4 392.4,158.9" stroke="#b4b4b4" stroke-width="0.6875" fill="none"/><path d="M396.7,165.1C397.1,165.2 398.4,165.8 398.8,165.8C399.2,165.8 398.8,165.6 399.1,165.2C399.4,164.8 400.2,163.2 400.6,163.4C401.0,163.5 401.0,165.7 401.3,166.0C401.7,166.4 402.2,165.9 402.5,165.5C402.8,165.1 402.7,163.9 403.0,163.7C403.3,163.4 404.2,164.1 404.5,164.2" stroke="#b4b4b4" stroke-width="0.6875" fill="none"/><path d="M382.0,170.9C382.0,171.4 382.0,173.5 382.1,173.8C382.3,174.0 382.6,172.7 383.1,172.5C383.5,172.3 384.4,172.7 384.9,172.7C385.4,172.7 385.9,172.4 386.2,172.5C386.6,172.7 386.9,173.6 387.1,173.6C387.4,173.6 387.5,172.4 387.8,172.4C388.0,172.3 388.5,173.0 388.7,173.2" stroke="#b4b4b4" stroke-width="0.6875" fill="none"/><path d="M406.2,178.0C406.6,178.2 407.7,179.3 408.2,179.2C408.7,179.1 408.6,177.7 409.1,177.4C409.7,177.1 410.5,177.4 411.3,177.4C412.1,177.4 413.4,177.4 413.8,177.4" stroke="#b4b4b4" stroke-width="0.6875" fill="none"/><path d="M419.2,176.0C419.7,175.9 421.3,175.8 421.9,175.7C422.5,175.6 422.7,175.1 423.1,175.3C423.5,175.4 424.2,176.6 424.5,176.4C424.7,176.2 424.3,174.1 424.7,174.1C425.0,174.1 426.0,176.1 426.6,176.4C427.2,176.6 427.9,175.9 428.4,175.5C428.9,175.2 429.5,174.3 429.7,174.1" stroke="#b4b4b4" stroke-width="0.6875" fill="none"/><path d="M427.1,184.5C427.3,184.5 427.6,184.2 428.1,184.4C428.5,184.5 429.5,185.2 430.0,185.2C430.5,185.2 430.4,184.8 430.9,184.5C431.3,184.2 432.0,183.6 432.7,183.6C433.4,183.6 434.7,184.2 435.1,184.3" stroke="#b4b4b4" stroke-width="0.6875" fill="none"/><path d="M340.1,128.8C340.4,128.9 341.3,128.9 341.9,129.0C342.6,129.2 343.3,129.6 344.0,129.6C344.7,129.6 345.4,129.0 346.2,129.1C346.9,129.2 348.1,130.2 348.5,130.4" stroke="#b4b4b4" stroke-width="0.6875" fill="none"/><path d="M367.8,137.0C367.9,137.2 368.3,137.7 368.7,137.7C369.1,137.8 369.6,137.4 370.2,137.4C370.8,137.4 371.8,137.8 372.3,137.8C372.8,137.8 372.8,137.2 373.2,137.4C373.5,137.6 373.9,138.7 374.6,138.9C375.4,139.1 377.1,138.5 377.5,138.5" stroke="#b4b4b4" stroke-width="0.6875" fill="none"/><path d="M392.3,153.5C392.3,153.5 392.1,153.7 392.4,153.4C392.6,153.2 393.2,152.0 393.7,152.0C394.3,151.9 395.5,153.1 395.8,153.1C396.1,153.0 395.3,152.0 395.6,151.8C395.8,151.5 396.8,151.5 397.2,151.5C397.6,151.4 397.7,151.4 397.8,151.4" stroke="#b4b4b4" stroke-width="0.6875" fill="none"/><path d="M411.0,165.8C411.1,165.8 410.8,165.4 411.2,165.5C411.6,165.5 412.8,165.7 413.2,166.0C413.5,166.4 412.9,167.3 413.3,167.6C413.7,167.8 415.1,167.9 415.5,167.5C415.8,167.1 415.3,165.4 415.4,165.2C415.5,165.1 416.2,166.6 416.3,166.9" stroke="#b4b4b4" stroke-width="0.6875" fill="none"/><path d="M399.0,175.1C399.2,175.2 399.9,175.6 400.3,175.4C400.7,175.3 400.9,174.4 401.3,174.1C401.8,173.9 402.5,174.1 403.0,174.0C403.5,173.8 403.6,173.5 404.2,173.3C404.8,173.1 405.8,173.0 406.5,173.0C407.1,173.0 407.9,173.2 408.1,173.3" stroke="#b4b4b4" stroke-width="0.6875" fill="none"/><path d="M353.2,122.7C353.6,122.7 354.7,122.4 355.4,122.6C356.2,122.8 357.0,123.6 357.6,123.9C358.2,124.1 358.1,124.3 358.9,124.2C359.6,124.1 361.4,123.4 362.0,123.3" stroke="#b4b4b4" stroke-width="0.6875" fill="none"/><path d="M285.2,128.4C285.5,128.0 286.6,126.2 286.9,126.2C287.2,126.2 286.6,128.2 286.9,128.4C287.2,128.5 288.4,127.4 288.8,127.1C289.2,126.8 289.0,127.0 289.4,126.8C289.8,126.7 291.0,126.4 291.4,126.3" stroke="#b4b4b4" stroke-width="0.6875" fill="none"/><path d="M242.2,112.0C242.6,112.0 244.3,112.1 244.7,112.0C245.1,112.0 244.3,111.8 244.6,111.8C244.8,111.9 245.8,112.4 246.3,112.5C246.7,112.5 246.9,112.0 247.3,112.1C247.7,112.3 248.4,113.7 248.7,113.5C248.9,113.3 248.8,111.5 248.8,111.1" stroke="#b4b4b4" stroke-width="0.6875" fill="none"/><path d="M410.9,184.6C411.1,184.6 411.5,184.5 412.1,184.6C412.7,184.7 414.1,185.2 414.6,185.2C415.1,185.2 414.7,184.3 415.2,184.7C415.8,185.0 417.2,187.1 417.8,187.2C418.5,187.3 418.9,185.6 419.1,185.3" stroke="#b4b4b4" stroke-width="0.6875" fill="none"/><path d="M431.9,194.0C432.2,193.9 433.3,193.3 434.0,193.4C434.7,193.5 435.1,194.3 435.9,194.5C436.7,194.6 438.2,194.1 438.7,194.4C439.1,194.7 438.5,196.3 438.9,196.2C439.3,196.1 440.6,194.4 440.9,194.0" stroke="#b4b4b4" stroke-width="0.6875" fill="none"/><path d="M444.2,203.0C444.3,203.0 444.7,203.1 445.0,203.0C445.3,202.9 445.6,202.3 446.0,202.2C446.3,202.2 446.9,202.8 447.3,202.7C447.8,202.5 448.0,201.6 448.5,201.5C449.0,201.4 449.6,201.9 450.2,202.1C450.8,202.4 451.6,202.9 451.9,203.1" stroke="#b4b4b4" stroke-width="0.6875" fill="none"/><path d="M339.5,126.0C343.2,127.2 354.4,130.5 361.5,133.2C368.6,135.9 375.4,138.9 382.2,142.2C388.9,145.4 395.4,148.4 402.0,152.7C408.6,156.9 415.6,162.6 421.8,167.7C428.1,172.8 433.3,177.5 439.5,183.5C445.7,189.5 453.4,198.5 458.8,203.8C464.2,209.1 467.1,211.2 472.0,215.3C476.9,219.4 482.2,224.4 488.5,228.5C494.8,232.6 506.0,238.2 509.5,240.1" stroke="#b8b8b8" stroke-width="0.75" fill="none"/><path d="M429.8,261.8C435.1,261.6 452.7,260.0 461.5,260.4C470.3,260.8 475.5,261.9 482.7,264.4C489.9,266.9 497.2,271.3 504.5,275.3C511.8,279.3 519.1,284.4 526.4,288.4C533.7,292.4 540.9,296.4 548.2,299.3C555.5,302.2 562.8,304.4 570.1,305.9C577.4,307.3 588.3,307.6 591.9,308.0" stroke="#b8b8b8" stroke-width="0.6875" fill="none"/><path d="M78.0,163.0C78.3,164.5 78.0,169.2 80.0,172.0C82.0,174.8 86.0,177.1 90.0,179.5C94.0,181.9 101.7,185.3 104.0,186.5" stroke="#b8b8b8" stroke-width="0.6875" fill="none"/><path d="M200.0,212.0C202.5,213.7 209.7,219.0 215.0,222.0C220.3,225.0 224.2,227.7 232.0,230.0C239.8,232.3 250.7,233.2 262.0,236.0C273.3,238.8 285.3,243.2 300.0,247.0C314.7,250.8 333.3,256.2 350.0,259.0C366.7,261.8 391.7,263.2 400.0,264.0" stroke="#c4c4c4" stroke-width="0.6875" fill="none"/><path d="M240.0,190.0L246.0,214.0" stroke="#d0d0d0" stroke-width="0.625" fill="none"/><path d="M251.0,191.6L257.0,215.4" stroke="#d0d0d0" stroke-width="0.625" fill="none"/><path d="M262.0,193.2L268.0,216.8" stroke="#d0d0d0" stroke-width="0.625" fill="none"/><path d="M273.0,194.8L279.0,218.2" stroke="#d0d0d0" stroke-width="0.625" fill="none"/><path d="M284.0,196.4L290.0,219.6" stroke="#d0d0d0" stroke-width="0.625" fill="none"/><path d="M295.0,198.0L301.0,221.0" stroke="#d0d0d0" stroke-width="0.625" fill="none"/><path d="M306.0,199.6L312.0,222.4" stroke="#d0d0d0" stroke-width="0.625" fill="none"/><path d="M317.0,201.2L323.0,223.8" stroke="#d0d0d0" stroke-width="0.625" fill="none"/><path d="M328.0,202.8L334.0,225.2" stroke="#d0d0d0" stroke-width="0.625" fill="none"/><path d="M339.0,204.4L345.0,226.6" stroke="#d0d0d0" stroke-width="0.625" fill="none"/><path d="M350.0,206.0L356.0,228.0" stroke="#d0d0d0" stroke-width="0.625" fill="none"/><path d="M361.0,207.6L367.0,229.4" stroke="#d0d0d0" stroke-width="0.625" fill="none"/><path d="M372.0,209.2L378.0,230.8" stroke="#d0d0d0" stroke-width="0.625" fill="none"/><path d="M383.0,210.8L389.0,232.2" stroke="#d0d0d0" stroke-width="0.625" fill="none"/><path d="M223.0,207.0C225.7,210.3 227.8,218.0 229.9,223.7C232.0,229.4 234.3,235.9 235.3,241.0C236.3,246.1 236.7,250.7 235.8,254.2C234.9,257.7 232.7,260.4 229.9,261.9C227.1,263.4 222.7,264.3 219.0,263.0C215.3,261.7 211.1,258.2 208.0,254.2C204.9,250.2 202.4,243.9 200.4,239.0C198.4,234.1 197.0,229.5 196.0,225.0C195.0,220.5 193.3,215.3 194.5,212.0C195.7,208.7 199.8,206.3 203.0,205.0C206.2,203.7 210.7,203.7 214.0,204.0C217.3,204.3 220.3,203.7 223.0,207.0Z" stroke="none" stroke-width="0.125" fill="#fff"/><path d="M221.0,202.0C222.5,205.6 227.5,217.2 229.9,223.7C232.3,230.2 234.3,235.9 235.3,241.0C236.3,246.1 236.7,250.7 235.8,254.2C234.9,257.7 232.7,260.4 229.9,261.9C227.1,263.4 222.7,264.3 219.0,263.0C215.3,261.7 211.1,258.2 208.0,254.2C204.9,250.2 202.4,243.9 200.4,239.0C198.4,234.1 197.1,229.5 196.0,225.0C194.9,220.5 194.3,215.5 193.6,212.0C192.9,208.5 192.3,205.3 192.0,204.0" stroke="#9a9a9a" stroke-width="1.0" fill="none"/><path d="M202.5,200.1L206.8,225.6" stroke="#222" stroke-width="1.0" fill="none"/><path d="M205.1,200.1L209.2,225.6" stroke="#222" stroke-width="1.0" fill="none"/><path d="M210.1,198.4L215.3,225.6" stroke="#222" stroke-width="1.0" fill="none"/><path d="M212.7,198.4L217.7,225.6" stroke="#222" stroke-width="1.0" fill="none"/><path d="M205.5,226.5C206.2,225.4 208.2,225.2 210.0,225.0C211.8,224.8 214.3,225.1 216.0,225.5C217.7,225.9 219.2,226.6 220.0,227.5C220.8,228.4 221.2,230.2 221.0,231.0C220.8,231.8 220.5,232.3 219.0,232.6C217.5,232.9 214.2,233.0 212.0,232.8C209.8,232.6 207.1,232.6 206.0,231.5C204.9,230.4 204.8,227.6 205.5,226.5Z" stroke="#222" stroke-width="0.9375" fill="none"/><path d="M210.0,226.0L209.5,232.0" stroke="#444" stroke-width="0.625" fill="none"/><path d="M215.0,226.0L215.0,232.5" stroke="#444" stroke-width="0.625" fill="none"/><path d="M219.5,227.0L219.0,232.5" stroke="#444" stroke-width="0.625" fill="none"/><path d="M206.4,232.4L205.7,242.6" stroke="#222" stroke-width="0.9375" fill="none"/><path d="M208.0,232.4L206.9,242.6" stroke="#222" stroke-width="0.9375" fill="none"/><path d="M205.7,236.0L208.1,236.0" stroke="#333" stroke-width="0.75" fill="none"/><path d="M205.4,239.5L207.8,239.5" stroke="#333" stroke-width="0.75" fill="none"/><path d="M211.5,233.2L213.4,252.8" stroke="#222" stroke-width="0.9375" fill="none"/><path d="M213.1,233.2L214.6,252.8" stroke="#222" stroke-width="0.9375" fill="none"/><path d="M211.7,240.1L214.1,240.1" stroke="#333" stroke-width="0.75" fill="none"/><path d="M212.3,246.9L214.7,246.9" stroke="#333" stroke-width="0.75" fill="none"/><path d="M215.7,233.2L224.4,258.7" stroke="#222" stroke-width="0.9375" fill="none"/><path d="M217.3,233.2L225.6,258.7" stroke="#222" stroke-width="0.9375" fill="none"/><path d="M218.3,242.1L220.7,242.1" stroke="#333" stroke-width="0.75" fill="none"/><path d="M221.2,251.0L223.6,251.0" stroke="#333" stroke-width="0.75" fill="none"/><path d="M219.1,232.4L229.5,251.0" stroke="#222" stroke-width="0.9375" fill="none"/><path d="M220.7,232.4L230.7,251.0" stroke="#222" stroke-width="0.9375" fill="none"/><path d="M222.3,238.9L224.7,238.9" stroke="#333" stroke-width="0.75" fill="none"/><path d="M225.8,245.4L228.2,245.4" stroke="#333" stroke-width="0.75" fill="none"/><path d="M221.7,229.8L228.7,234.0" stroke="#222" stroke-width="0.9375" fill="none"/><path d="M223.3,229.8L229.9,234.0" stroke="#222" stroke-width="0.9375" fill="none"/><path d="M223.7,231.3L226.1,231.3" stroke="#333" stroke-width="0.75" fill="none"/><path d="M226.1,232.7L228.5,232.7" stroke="#333" stroke-width="0.75" fill="none"/><defs><linearGradient id="bg1" x1="0" y1="0" x2="0" y2="1"><stop offset="0" stop-color="#fff" stop-opacity="0"/><stop offset="1" stop-color="#e6e6e6"/></linearGradient></defs><rect x="36" y="385" width="582" height="7" fill="url(#bg1)"/><path d="M38.0,54.2C55.0,54.2 96.3,54.3 140.0,54.3C183.7,54.3 273.3,54.2 300.0,54.2" stroke="#e4e4e4" stroke-width="0.75" fill="none"/></svg></div>
<div class="a" style="left:0px;top:395px;width:618px;height:17px;background:#2b2b2b;"></div>
<div class="t" style="left:22px;top:2.98px;font-size:5.2px;line-height:6.24px;color:#f2f5fb;font-weight:bold;">Photoshop</div>
<div class="t" style="left:56px;top:2.92px;font-size:5.3px;line-height:6.36px;color:#f2f5fb;">File</div>
<div class="t" style="left:72px;top:2.92px;font-size:5.3px;line-height:6.36px;color:#f2f5fb;">Edit</div>
<div class="t" style="left:89px;top:2.92px;font-size:5.3px;line-height:6.36px;color:#f2f5fb;">Image</div>
<div class="t" style="left:111px;top:2.92px;font-size:5.3px;line-height:6.36px;color:#f2f5fb;">Layer</div>
<div class="t" style="left:131px;top:2.92px;font-size:5.3px;line-height:6.36px;color:#f2f5fb;">Type</div>
<div class="t" style="left:151px;top:2.92px;font-size:5.3px;line-height:6.36px;color:#f2f5fb;">Select</div>
<div class="t" style="left:173px;top:2.92px;font-size:5.3px;line-height:6.36px;color:#f2f5fb;">Filter</div>
<div class="t" style="left:193px;top:2.92px;font-size:5.3px;line-height:6.36px;color:#f2f5fb;">3D</div>
<div class="t" style="left:207px;top:2.92px;font-size:5.3px;line-height:6.36px;color:#f2f5fb;">View</div>
<div class="t" style="left:226px;top:2.92px;font-size:5.3px;line-height:6.36px;color:#f2f5fb;">Plugins</div>
<div class="t" style="left:251px;top:2.92px;font-size:5.3px;line-height:6.36px;color:#f2f5fb;">Window</div>
<div class="t" style="left:277px;top:2.92px;font-size:5.3px;line-height:6.36px;color:#f2f5fb;">Help</div>
<div class="t" style="left:336.6px;top:14.28px;font-size:5.2px;line-height:6.24px;color:#d6d6d6;">Adobe Photoshop 2022</div>
<div class="a" style="left:1.3000000000000003px;top:13.999999999999998px;width:4.8px;height:4.8px;border-radius:50%;background:#cf4a43"></div>
<div class="a" style="left:8.799999999999999px;top:13.999999999999998px;width:4.8px;height:4.8px;border-radius:50%;background:#cfa63e"></div>
<div class="a" style="left:16.6px;top:13.999999999999998px;width:4.8px;height:4.8px;border-radius:50%;background:#3fae4c"></div>
<div class="t" style="left:72px;top:25.74px;font-size:4.1px;line-height:4.92px;color:#bdbdbd;">Mode:</div>
<div class="a" style="left:86.8px;top:24.6px;width:48px;height:5.6px;background:#2a2a2a;border-radius:1px"></div>
<div class="t" style="left:89px;top:25.80px;font-size:4.0px;line-height:4.80px;color:#d4d4d4;">Normal</div>
<div class="t" style="left:138.9px;top:25.80px;font-size:4.0px;line-height:4.80px;color:#bdbdbd;">Opacity:</div>
<div class="a" style="left:155.5px;top:24.6px;width:14.5px;height:5.6px;background:#2a2a2a;border-radius:1px"></div>
<div class="t" style="left:156.5px;top:25.80px;font-size:4.0px;line-height:4.80px;color:#d4d4d4;">100%</div>
<div class="a" style="left:178.7px;top:23.4px;width:8.2px;height:8px;background:#222222;border-radius:1px"></div>
<div class="t" style="left:192px;top:25.74px;font-size:4.1px;line-height:4.92px;color:#bdbdbd;">Flow:</div>
<div class="a" style="left:203.5px;top:24.6px;width:14px;height:5.6px;background:#2a2a2a;border-radius:1px"></div>
<div class="t" style="left:204.5px;top:25.80px;font-size:4.0px;line-height:4.80px;color:#d4d4d4;">100%</div>
<div class="t" style="left:240.7px;top:25.86px;font-size:3.9px;line-height:4.68px;color:#bdbdbd;">Smoothing:</div>
<div class="a" style="left:262.5px;top:24.6px;width:15.5px;height:5.6px;background:#2a2a2a;border-radius:1px"></div>
<div class="t" style="left:264px;top:25.80px;font-size:4.0px;line-height:4.80px;color:#d4d4d4;">10%</div>
<div class="a" style="left:305.7px;top:24.6px;width:14.5px;height:5.6px;background:#2a2a2a;border-radius:1px"></div>
<div class="t" style="left:307px;top:25.80px;font-size:4.0px;line-height:4.80px;color:#d4d4d4;">0°</div>
<div class="t" style="left:45px;top:24.74px;font-size:2.6px;line-height:3.12px;color:#bbbbbb;">1</div>
<div class="t" style="left:44.8px;top:29.94px;font-size:2.6px;line-height:3.12px;color:#bbbbbb;">5</div>
<div class="t" style="left:23px;top:37.41px;font-size:4.65px;line-height:5.58px;color:#a9a9a9;">Elephants_views_manatee copy.jpg @ 16.7% (RGB/8#)</div>
<div class="t" style="left:16.5px;top:37.44px;font-size:4.6px;line-height:5.52px;color:#9a9a9a;">×</div>
<div class="t" style="left:146px;top:37.44px;font-size:4.6px;line-height:5.52px;color:#bdbdbd;">×</div>
<div class="t" style="left:151.6px;top:37.54px;font-size:4.43px;line-height:5.32px;color:#e8e8e8;font-weight:bold;">manatee @ 50% (skel, RGB/8) *</div>
<div class="a" style="left:17.75px;top:45.5px;width:0.5px;height:6px;background:#383838"></div>
<div class="t" style="left:18.749999999999996px;top:47.32px;font-size:3.3px;line-height:3.96px;color:#9a9a9a;">-100</div>
<div class="a" style="left:36.80px;top:45.5px;width:0.5px;height:6px;background:#383838"></div>
<div class="t" style="left:37.8px;top:47.32px;font-size:3.3px;line-height:3.96px;color:#9a9a9a;">0</div>
<div class="a" style="left:55.85px;top:45.5px;width:0.5px;height:6px;background:#383838"></div>
<div class="t" style="left:56.849999999999994px;top:47.32px;font-size:3.3px;line-height:3.96px;color:#9a9a9a;">100</div>
<div class="a" style="left:74.90px;top:45.5px;width:0.5px;height:6px;background:#383838"></div>
<div class="t" style="left:75.9px;top:47.32px;font-size:3.3px;line-height:3.96px;color:#9a9a9a;">200</div>
<div class="a" style="left:93.95px;top:45.5px;width:0.5px;height:6px;background:#383838"></div>
<div class="t" style="left:94.94999999999999px;top:47.32px;font-size:3.3px;line-height:3.96px;color:#9a9a9a;">300</div>
<div class="a" style="left:113.00px;top:45.5px;width:0.5px;height:6px;background:#383838"></div>
<div class="t" style="left:114.0px;top:47.32px;font-size:3.3px;line-height:3.96px;color:#9a9a9a;">400</div>
<div class="a" style="left:132.05px;top:45.5px;width:0.5px;height:6px;background:#383838"></div>
<div class="t" style="left:133.05px;top:47.32px;font-size:3.3px;line-height:3.96px;color:#9a9a9a;">500</div>
<div class="a" style="left:151.10px;top:45.5px;width:0.5px;height:6px;background:#383838"></div>
<div class="t" style="left:152.1px;top:47.32px;font-size:3.3px;line-height:3.96px;color:#9a9a9a;">600</div>
<div class="a" style="left:170.15px;top:45.5px;width:0.5px;height:6px;background:#383838"></div>
<div class="t" style="left:171.14999999999998px;top:47.32px;font-size:3.3px;line-height:3.96px;color:#9a9a9a;">700</div>
<div class="a" style="left:189.20px;top:45.5px;width:0.5px;height:6px;background:#383838"></div>
<div class="t" style="left:190.2px;top:47.32px;font-size:3.3px;line-height:3.96px;color:#9a9a9a;">800</div>
<div class="a" style="left:208.25px;top:45.5px;width:0.5px;height:6px;background:#383838"></div>
<div class="t" style="left:209.25px;top:47.32px;font-size:3.3px;line-height:3.96px;color:#9a9a9a;">900</div>
<div class="a" style="left:227.30px;top:45.5px;width:0.5px;height:6px;background:#383838"></div>
<div class="t" style="left:228.3px;top:47.32px;font-size:3.3px;line-height:3.96px;color:#9a9a9a;">1000</div>
<div class="a" style="left:246.35px;top:45.5px;width:0.5px;height:6px;background:#383838"></div>
<div class="t" style="left:247.35000000000002px;top:47.32px;font-size:3.3px;line-height:3.96px;color:#9a9a9a;">1100</div>
<div class="a" style="left:265.40px;top:45.5px;width:0.5px;height:6px;background:#383838"></div>
<div class="t" style="left:266.4px;top:47.32px;font-size:3.3px;line-height:3.96px;color:#9a9a9a;">1200</div>
<div class="a" style="left:284.45px;top:45.5px;width:0.5px;height:6px;background:#383838"></div>
<div class="t" style="left:285.45px;top:47.32px;font-size:3.3px;line-height:3.96px;color:#9a9a9a;">1300</div>
<div class="a" style="left:303.50px;top:45.5px;width:0.5px;height:6px;background:#383838"></div>
<div class="t" style="left:304.5px;top:47.32px;font-size:3.3px;line-height:3.96px;color:#9a9a9a;">1400</div>
<div class="a" style="left:322.55px;top:45.5px;width:0.5px;height:6px;background:#383838"></div>
<div class="t" style="left:323.55px;top:47.32px;font-size:3.3px;line-height:3.96px;color:#9a9a9a;">1500</div>
<div class="a" style="left:341.60px;top:45.5px;width:0.5px;height:6px;background:#383838"></div>
<div class="t" style="left:342.6px;top:47.32px;font-size:3.3px;line-height:3.96px;color:#9a9a9a;">1600</div>
<div class="a" style="left:360.65px;top:45.5px;width:0.5px;height:6px;background:#383838"></div>
<div class="t" style="left:361.65000000000003px;top:47.32px;font-size:3.3px;line-height:3.96px;color:#9a9a9a;">1700</div>
<div class="a" style="left:379.70px;top:45.5px;width:0.5px;height:6px;background:#383838"></div>
<div class="t" style="left:380.7px;top:47.32px;font-size:3.3px;line-height:3.96px;color:#9a9a9a;">1800</div>
<div class="a" style="left:398.75px;top:45.5px;width:0.5px;height:6px;background:#383838"></div>
<div class="t" style="left:399.75px;top:47.32px;font-size:3.3px;line-height:3.96px;color:#9a9a9a;">1900</div>
<div class="a" style="left:417.80px;top:45.5px;width:0.5px;height:6px;background:#383838"></div>
<div class="t" style="left:418.8px;top:47.32px;font-size:3.3px;line-height:3.96px;color:#9a9a9a;">2000</div>
<div class="a" style="left:436.85px;top:45.5px;width:0.5px;height:6px;background:#383838"></div>
<div class="t" style="left:437.85px;top:47.32px;font-size:3.3px;line-height:3.96px;color:#9a9a9a;">2100</div>
<div class="a" style="left:455.90px;top:45.5px;width:0.5px;height:6px;background:#383838"></div>
<div class="t" style="left:456.90000000000003px;top:47.32px;font-size:3.3px;line-height:3.96px;color:#9a9a9a;">2200</div>
<div class="a" style="left:474.95px;top:45.5px;width:0.5px;height:6px;background:#383838"></div>
<div class="t" style="left:475.95000000000005px;top:47.32px;font-size:3.3px;line-height:3.96px;color:#9a9a9a;">2300</div>
<div class="a" style="left:494.00px;top:45.5px;width:0.5px;height:6px;background:#383838"></div>
<div class="t" style="left:495.0px;top:47.32px;font-size:3.3px;line-height:3.96px;color:#9a9a9a;">2400</div>
<div class="a" style="left:513.05px;top:45.5px;width:0.5px;height:6px;background:#383838"></div>
<div class="t" style="left:514.05px;top:47.32px;font-size:3.3px;line-height:3.96px;color:#9a9a9a;">2500</div>
<div class="a" style="left:532.10px;top:45.5px;width:0.5px;height:6px;background:#383838"></div>
<div class="t" style="left:533.1px;top:47.32px;font-size:3.3px;line-height:3.96px;color:#9a9a9a;">2600</div>
<div class="a" style="left:551.15px;top:45.5px;width:0.5px;height:6px;background:#383838"></div>
<div class="t" style="left:552.15px;top:47.32px;font-size:3.3px;line-height:3.96px;color:#9a9a9a;">2700</div>
<div class="a" style="left:570.20px;top:45.5px;width:0.5px;height:6px;background:#383838"></div>
<div class="t" style="left:571.1999999999999px;top:47.32px;font-size:3.3px;line-height:3.96px;color:#9a9a9a;">2800</div>
<div class="a" style="left:589.25px;top:45.5px;width:0.5px;height:6px;background:#383838"></div>
<div class="t" style="left:590.25px;top:47.32px;font-size:3.3px;line-height:3.96px;color:#9a9a9a;">2900</div>
<div class="a" style="left:608.30px;top:45.5px;width:0.5px;height:6px;background:#383838"></div>
<div class="t" style="left:609.3px;top:47.32px;font-size:3.3px;line-height:3.96px;color:#9a9a9a;">3000</div>
<div class="a" style="left:544.2px;top:45.5px;width:0.8px;height:5px;background:#d8d8d8;"></div>
<div class="t" style="left:21.1px;top:393.76px;font-size:2.9px;line-height:3.48px;color:#c0c0c0;letter-spacing:0.2px">50.00%</div>
<div class="t" style="left:43px;top:393.76px;font-size:2.9px;line-height:3.48px;color:#b8b8b8;letter-spacing:0.62px">1616 px x 1616 px (72 ppi)</div>
<div class="t" style="left:102.8px;top:393.34px;font-size:3.6px;line-height:4.32px;color:#aaa;">›</div>
<div class="a" style="left:34.6px;top:52px;width:1.4px;height:340px;background:#0e0e0e;"></div>
<div class="a" style="left:288px;top:393.4px;width:222px;height:2px;background:#474747;border-radius:1px"></div>
<div class="a" style="left:618px;top:28.4px;width:114px;height:5.2px;background:#2a2a2a;"></div>
<div class="t" style="left:619.8px;top:28.90px;font-size:5px;line-height:6.00px;color:#c8c8c8;">×</div>
<div class="a" style="left:618px;top:33.6px;width:114px;height:9.6px;background:#292929;"></div>
<div class="a" style="left:619px;top:33.6px;width:20px;height:9.6px;background:#3a3a3a;"></div>
<div class="t" style="left:621.8px;top:36.86px;font-size:4.06px;line-height:4.87px;color:#e0e0e0;font-weight:bold;">History</div>
<div class="a" style="left:618px;top:43.2px;width:114px;height:88.7px;background:#383838;"></div>
<div class="a" style="left:618px;top:52.0px;width:114px;height:0.5px;background:#2e2e2e;"></div>
<div class="t" style="left:640.2px;top:46.54px;font-size:4.1px;line-height:4.92px;color:#e4e4e4;">Brush Tool</div>
<div class="a" style="left:618px;top:60.8px;width:114px;height:0.5px;background:#2e2e2e;"></div>
<div class="t" style="left:640.2px;top:55.34px;font-size:4.1px;line-height:4.92px;color:#e4e4e4;">Brush Tool</div>
<div class="a" style="left:618px;top:69.6px;width:114px;height:0.5px;background:#2e2e2e;"></div>
<div class="t" style="left:640.2px;top:64.14px;font-size:4.1px;line-height:4.92px;color:#e4e4e4;">Brush Tool</div>
<div class="a" style="left:618px;top:78.4px;width:114px;height:0.5px;background:#2e2e2e;"></div>
<div class="t" style="left:640.2px;top:72.94px;font-size:4.1px;line-height:4.92px;color:#e4e4e4;">Brush Tool</div>
<div class="a" style="left:618px;top:87.2px;width:114px;height:0.5px;background:#2e2e2e;"></div>
<div class="t" style="left:640.2px;top:81.74px;font-size:4.1px;line-height:4.92px;color:#e4e4e4;">Brush Tool</div>
<div class="a" style="left:618px;top:96.0px;width:114px;height:0.5px;background:#2e2e2e;"></div>
<div class="t" style="left:640.2px;top:90.54px;font-size:4.1px;line-height:4.92px;color:#e4e4e4;">Brush Tool</div>
<div class="a" style="left:618px;top:104.80000000000001px;width:114px;height:0.5px;background:#2e2e2e;"></div>
<div class="t" style="left:640.2px;top:99.34px;font-size:4.1px;line-height:4.92px;color:#e4e4e4;">Brush Tool</div>
<div class="a" style="left:618px;top:113.60000000000001px;width:114px;height:0.5px;background:#2e2e2e;"></div>
<div class="t" style="left:640.2px;top:108.14px;font-size:4.1px;line-height:4.92px;color:#e4e4e4;">Brush Tool</div>
<div class="a" style="left:618px;top:122.4px;width:114px;height:0.5px;background:#2e2e2e;"></div>
<div class="t" style="left:640.2px;top:116.94px;font-size:4.1px;line-height:4.92px;color:#e4e4e4;">Brush Tool</div>
<div class="a" style="left:618px;top:123.10000000000001px;width:114px;height:8.8px;background:#4e4e4e;"></div>
<div class="a" style="left:618px;top:131.2px;width:114px;height:0.5px;background:#2e2e2e;"></div>
<div class="t" style="left:640.2px;top:125.74px;font-size:4.1px;line-height:4.92px;color:#e4e4e4;">Brush Tool</div>
<div class="a" style="left:618px;top:131.9px;width:114px;height:10.6px;background:#383838;"></div>
<div class="a" style="left:618px;top:142.2px;width:114px;height:1.2px;background:#262626;"></div>
<div class="a" style="left:618px;top:143.4px;width:114px;height:9.3px;background:#292929;"></div>
<div class="a" style="left:619px;top:143.4px;width:19px;height:9.3px;background:#3a3a3a;"></div>
<div class="t" style="left:621.8px;top:146.82px;font-size:3.8px;line-height:4.56px;color:#e0e0e0;font-weight:bold;">Layers</div>
<div class="a" style="left:618px;top:152.7px;width:114px;height:239px;background:#383838;"></div>
<div class="a" style="left:620.7px;top:157.7px;width:32.3px;height:6px;background:#2a2a2a;border-radius:1px"></div>
<div class="t" style="left:628.2px;top:159.16px;font-size:3.9px;line-height:4.68px;color:#cfcfcf;">Kind</div>
<div class="a" style="left:620.7px;top:168px;width:48.1px;height:5.6px;background:#2a2a2a;border-radius:1px"></div>
<div class="t" style="left:622.4px;top:169.46px;font-size:3.9px;line-height:4.68px;color:#cfcfcf;">Normal</div>
<div class="t" style="left:671px;top:169.52px;font-size:3.8px;line-height:4.56px;color:#9e9e9e;">Opacity:</div>
<div class="a" style="left:687px;top:168px;width:14px;height:5.6px;background:#2a2a2a;border-radius:1px"></div>
<div class="t" style="left:688px;top:169.52px;font-size:3.8px;line-height:4.56px;color:#cfcfcf;">100%</div>
<div class="t" style="left:620.2px;top:180.26px;font-size:3.9px;line-height:4.68px;color:#9e9e9e;">Lock:</div>
<div class="t" style="left:679.8px;top:180.32px;font-size:3.8px;line-height:4.56px;color:#9e9e9e;">Fill:</div>
<div class="a" style="left:687px;top:178.9px;width:14px;height:5.6px;background:#2a2a2a;border-radius:1px"></div>
<div class="t" style="left:688px;top:180.32px;font-size:3.8px;line-height:4.56px;color:#cfcfcf;">100%</div>
<div class="a" style="left:618px;top:187.7px;width:114px;height:13.1px;background:#4e4e4e;"></div>
<div class="a" style="left:630.2px;top:188.29999999999998px;width:15px;height:12.4px;background:transparent;border:0.8px solid #8a8a8a;border-radius:1px"></div>
<div class="a" style="left:618px;top:200.39999999999998px;width:114px;height:0.6px;background:#2c2c2c;"></div>
<div class="a ck" style="left:631.7px;top:189.40px;width:12px;height:10.4px"></div>
<div class="t" style="left:647px;top:193.06px;font-size:3.9px;line-height:4.68px;color:#e4e4e4;">skel</div>
<div class="a" style="left:618px;top:213.49999999999997px;width:114px;height:0.6px;background:#2c2c2c;"></div>
<div class="a ck" style="left:631.7px;top:202.50px;width:12px;height:10.4px"></div>
<div class="t" style="left:647px;top:206.16px;font-size:3.9px;line-height:4.68px;color:#e4e4e4;">Layer 5</div>
<div class="a" style="left:618px;top:226.59999999999997px;width:114px;height:0.6px;background:#2c2c2c;"></div>
<div class="a ck" style="left:631.7px;top:215.60px;width:12px;height:10.4px"></div>
<div class="t" style="left:647px;top:219.26px;font-size:3.9px;line-height:4.68px;color:#e4e4e4;">Layer 1 copy</div>
<div class="a" style="left:618px;top:239.7px;width:114px;height:0.6px;background:#2c2c2c;"></div>
<div class="a" style="left:631.7px;top:228.7px;width:12px;height:10.4px;background:#ffffff;"></div>
<div class="t" style="left:647px;top:232.36px;font-size:3.9px;line-height:4.68px;color:#e4e4e4;">Layer 3</div>
<div class="a" style="left:618px;top:252.79999999999998px;width:114px;height:0.6px;background:#2c2c2c;"></div>
<div class="a ck" style="left:631.7px;top:241.80px;width:12px;height:10.4px"></div>
<div class="t" style="left:647px;top:245.46px;font-size:3.9px;line-height:4.68px;color:#e4e4e4;">Layer 1</div>
<div class="a" style="left:618px;top:265.9px;width:114px;height:0.6px;background:#2c2c2c;"></div>
<div class="a" style="left:631.7px;top:254.89999999999998px;width:12px;height:10.4px;background:#ffffff;"></div>
<div class="t" style="left:647px;top:258.56px;font-size:3.9px;line-height:4.68px;color:#e4e4e4;">Background</div>
<svg class="a" style="left:0;top:0" width="732" height="412" viewBox="0 0 732 412"><path d="M5.6,27.6L8.7,24.5L11.8,27.6L11,27.6L11,30.2L9.5,30.2L9.5,28.4L7.9,28.4L7.9,30.2L6.4,30.2L6.4,27.6Z" stroke="none" stroke-width="0.7" fill="#e6e6e6" stroke-linecap="round" stroke-linejoin="round" /><rect x="17.8" y="23" width="0.5" height="9" fill="#2a2a2a"/><path d="M23.075,29.395000000000003L24.349999999999998,27.950000000000003" stroke="#dcdcdc" stroke-width="1.53" fill="none" stroke-linecap="round" stroke-linejoin="round" /><path d="M24.349999999999998,27.950000000000003L27.75,24.380000000000003" stroke="#dcdcdc" stroke-width="0.85" fill="none" stroke-linecap="round" stroke-linejoin="round" /><path d="M31.2,27.085L32.5,28.515L33.8,27.085" stroke="#9a9a9a" stroke-width="0.55" fill="none" stroke-linecap="round" stroke-linejoin="round" /><path d="M52.300000000000004,27.085L53.6,28.515L54.9,27.085" stroke="#9a9a9a" stroke-width="0.55" fill="none" stroke-linecap="round" stroke-linejoin="round" /><rect x="59.9" y="24.0" width="6.2" height="6.6" rx="0.5" fill="#d8d8d8"/><path d="M61,29.6L65.2,25.1" stroke="#333" stroke-width="0.7" fill="none" stroke-linecap="round" stroke-linejoin="round" /><path d="M59.9,24.0L62.3,24.0L59.9,26.4Z" stroke="none" stroke-width="0.7" fill="#888" stroke-linecap="round" stroke-linejoin="round" /><path d="M130.79999999999998,26.785L132.1,28.215L133.4,26.785" stroke="#9a9a9a" stroke-width="0.55" fill="none" stroke-linecap="round" stroke-linejoin="round" /><path d="M171.2,26.885L172.5,28.315L173.8,26.885" stroke="#9a9a9a" stroke-width="0.55" fill="none" stroke-linecap="round" stroke-linejoin="round" /><path d="M218.7,26.885L220,28.315L221.3,26.885" stroke="#9a9a9a" stroke-width="0.55" fill="none" stroke-linecap="round" stroke-linejoin="round" /><path d="M277.7,26.885L279,28.315L280.3,26.885" stroke="#9a9a9a" stroke-width="0.55" fill="none" stroke-linecap="round" stroke-linejoin="round" /><path d="M182.9,29.6a2.2,2.2 0 1 1 0.01,0" stroke="#e0e0e0" stroke-width="0.7" fill="none" stroke-linecap="round" stroke-linejoin="round" /><path d="M182.2,28.2L185.2,25.2" stroke="#e0e0e0" stroke-width="0.7" fill="none" stroke-linecap="round" stroke-linejoin="round" /><path d="M228.8,25.4a2.6,2.6 0 1 0 3.4,3.8" stroke="#dcdcdc" stroke-width="0.6" fill="none" stroke-linecap="round" stroke-linejoin="round" /><path d="M230.3,28.2L233.2,25.2" stroke="#dcdcdc" stroke-width="0.8" fill="none" stroke-linecap="round" stroke-linejoin="round" /><path d="M228.5,30.6L233,30.6" stroke="#dcdcdc" stroke-width="0.5" fill="none" stroke-linecap="round" stroke-linejoin="round" /><circle cx="288.7" cy="27.3" r="1.9" fill="none" stroke="#e6e6e6" stroke-width="1.2"/><circle cx="290.5" cy="29.6" r="0.5" fill="#aaa"/><path d="M298.3,29.2L302.6,29.2M298.3,29.2L302.2,25.6" stroke="#bdbdbd" stroke-width="0.55" fill="none" stroke-linecap="round" stroke-linejoin="round" /><path d="M300.8,29.2a2.4,2.4 0 0 0 -0.6,-1.7" stroke="#bdbdbd" stroke-width="0.4" fill="none" stroke-linecap="round" stroke-linejoin="round" /><path d="M329,29.6a2.2,2.2 0 1 1 0.01,0" stroke="#dcdcdc" stroke-width="0.7" fill="none" stroke-linecap="round" stroke-linejoin="round" /><path d="M328.4,28.2L331.4,25.2" stroke="#dcdcdc" stroke-width="0.7" fill="none" stroke-linecap="round" stroke-linejoin="round" /><path d="M339.4,24.8L344.6,24.8L343.6,27.3L344.6,29.8L339.4,29.8L340.4,27.3Z" stroke="#cfcfcf" stroke-width="0.55" fill="none" stroke-linecap="round" stroke-linejoin="round" /><path d="M342,24.2L342,30.4" stroke="#cfcfcf" stroke-width="0.4" fill="none" stroke-linecap="round" stroke-linejoin="round" /><defs><clipPath id="cl1"><rect x="670" y="20" width="62" height="8.4"/></clipPath></defs><g clip-path="url(#cl1)"><circle cx="684" cy="27.2" r="2.2" fill="#e0e0e0"/><circle cx="694.5" cy="27.4" r="1.9" fill="none" stroke="#dcdcdc" stroke-width="0.7"/><rect x="703.5" y="25.2" width="5" height="4" fill="none" stroke="#dcdcdc" stroke-width="0.7"/><path d="M712.6,27.005L713.5,27.995L714.4,27.005" stroke="#aaa" stroke-width="0.55" fill="none" stroke-linecap="round" stroke-linejoin="round" /><path d="M721,29.5L721,25.5L725,25.5L725,29.5M723,24.5L723,28" stroke="#dcdcdc" stroke-width="0.7" fill="none" stroke-linecap="round" stroke-linejoin="round" /></g><g transform="translate(0,-1.4)"><path d="M11.9,3.2C11.5,3.4 11.2,3.9 11.3,4.3C11.8,4.3 12.2,3.8 11.9,3.2Z" stroke="none" stroke-width="0.7" fill="#f4f6fb" stroke-linecap="round" stroke-linejoin="round" /><path d="M13.3,6.3C13.3,5.5 13.9,5.1 14,5C13.6,4.4 13,4.4 12.8,4.4C12.3,4.3 11.8,4.7 11.6,4.7C11.3,4.7 10.9,4.4 10.5,4.4C9.9,4.4 9.3,4.8 9.1,5.4C8.6,6.3 9,7.7 9.4,8.4C9.7,8.8 10,9.2 10.4,9.2C10.8,9.2 10.9,8.9 11.4,8.9C11.8,8.9 12,9.2 12.4,9.2C12.8,9.2 13.1,8.8 13.3,8.4C13.6,8 13.7,7.6 13.8,7.5C13.7,7.5 13.3,7.2 13.3,6.3Z" stroke="none" stroke-width="0.7" fill="#f4f6fb" stroke-linecap="round" stroke-linejoin="round" /></g><rect x="2" y="124.6" width="9" height="7.8" rx="0.8" fill="#1f1f1f"/><path d="M5.6,46.4L5.6,52.4M2.5999999999999996,49.4L8.6,49.4" stroke="#d4d4d4" stroke-width="0.8" fill="none" stroke-linecap="round" stroke-linejoin="round" /><path d="M4.6,47.4L5.6,46.4L6.6,47.4M4.6,51.4L5.6,52.4L6.6,51.4M3.5999999999999996,48.4L2.5999999999999996,49.4L3.5999999999999996,50.4M7.6,48.4L8.6,49.4L7.6,50.4" stroke="#d4d4d4" stroke-width="0.6" fill="none" stroke-linecap="round" stroke-linejoin="round" /><path d="M9.1,53.0L10.2,53.0L10.2,51.9Z" stroke="none" stroke-width="0.7" fill="#8a8a8a" stroke-linecap="round" stroke-linejoin="round" /><rect x="2.8" y="57.5" width="5.6" height="4.8" fill="none" stroke="#d4d4d4" stroke-width="0.6" stroke-dasharray="1,0.6"/><path d="M9.1,63.5L10.2,63.5L10.2,62.4Z" stroke="none" stroke-width="0.7" fill="#8a8a8a" stroke-linecap="round" stroke-linejoin="round" /><ellipse cx="5.6" cy="68.9" rx="2.8" ry="1.8" fill="none" stroke="#d4d4d4" stroke-width="0.7"/><path d="M4.1,70.5L4.6,72.3" stroke="#d4d4d4" stroke-width="0.6" fill="none" stroke-linecap="round" stroke-linejoin="round" /><path d="M9.1,73.1L10.2,73.1L10.2,72.0Z" stroke="none" stroke-width="0.7" fill="#8a8a8a" stroke-linecap="round" stroke-linejoin="round" /><path d="M2.8,81.7L6.6,77.9" stroke="#d4d4d4" stroke-width="0.9" fill="none" stroke-linecap="round" stroke-linejoin="round" /><path d="M7.6,75.9L7.6,77.4M8.6,76.9L6.6,76.9" stroke="#d4d4d4" stroke-width="0.5" fill="none" stroke-linecap="round" stroke-linejoin="round" /><path d="M9.1,82.5L10.2,82.5L10.2,81.4Z" stroke="none" stroke-width="0.7" fill="#8a8a8a" stroke-linecap="round" stroke-linejoin="round" /><path d="M3.8,85.7L3.8,90.5L8.6,90.5M2.5999999999999996,86.9L7.3999999999999995,86.9L7.3999999999999995,91.7" stroke="#d4d4d4" stroke-width="0.7" fill="none" stroke-linecap="round" stroke-linejoin="round" /><path d="M9.1,92.3L10.2,92.3L10.2,91.2Z" stroke="none" stroke-width="0.7" fill="#8a8a8a" stroke-linecap="round" stroke-linejoin="round" /><rect x="2.8" y="96.1" width="5.6" height="5" fill="none" stroke="#d4d4d4" stroke-width="0.7"/><path d="M2.8,96.1L8.399999999999999,101.1M8.399999999999999,96.1L2.8,101.1" stroke="#d4d4d4" stroke-width="0.5" fill="none" stroke-linecap="round" stroke-linejoin="round" /><path d="M9.1,102.19999999999999L10.2,102.19999999999999L10.2,101.1Z" stroke="none" stroke-width="0.7" fill="#8a8a8a" stroke-linecap="round" stroke-linejoin="round" /><path d="M2.8,111.2L6.6,107.4" stroke="#d4d4d4" stroke-width="1.0" fill="none" stroke-linecap="round" stroke-linejoin="round" /><path d="M6.1,106.60000000000001L7.8,105.4L8.6,106.2L7.3999999999999995,107.9Z" stroke="none" stroke-width="0.7" fill="#d4d4d4" stroke-linecap="round" stroke-linejoin="round" /><path d="M9.1,112.0L10.2,112.0L10.2,110.9Z" stroke="none" stroke-width="0.7" fill="#8a8a8a" stroke-linecap="round" stroke-linejoin="round" /><path d="M3.0999999999999996,119.7L7.1,115.7L8.1,116.7L4.1,120.7Z" stroke="#d4d4d4" stroke-width="1.4" fill="none" stroke-linecap="round" stroke-linejoin="round" /><path d="M9.1,121.8L10.2,121.8L10.2,120.7Z" stroke="none" stroke-width="0.7" fill="#8a8a8a" stroke-linecap="round" stroke-linejoin="round" /><path d="M3.3499999999999996,130.43L4.699999999999999,128.9" stroke="#dcdcdc" stroke-width="1.62" fill="none" stroke-linecap="round" stroke-linejoin="round" /><path d="M4.699999999999999,128.9L8.3,125.12" stroke="#dcdcdc" stroke-width="0.9" fill="none" stroke-linecap="round" stroke-linejoin="round" /><path d="M9.1,131.6L10.2,131.6L10.2,130.5Z" stroke="none" stroke-width="0.7" fill="#8a8a8a" stroke-linecap="round" stroke-linejoin="round" /><circle cx="5.6" cy="136.89999999999998" r="1.2" fill="#d4d4d4"/><path d="M2.8,139.7L8.399999999999999,139.7L8.399999999999999,141.2L2.8,141.2Z" stroke="none" stroke-width="0.7" fill="#d4d4d4" stroke-linecap="round" stroke-linejoin="round" /><path d="M5.6,137.7L5.6,139.7" stroke="#d4d4d4" stroke-width="0.8" fill="none" stroke-linecap="round" stroke-linejoin="round" /><path d="M9.1,142.29999999999998L10.2,142.29999999999998L10.2,141.2Z" stroke="none" stroke-width="0.7" fill="#8a8a8a" stroke-linecap="round" stroke-linejoin="round" /><path d="M3.7749999999999995,151.49499999999998L5.05,150.04999999999998" stroke="#dcdcdc" stroke-width="1.53" fill="none" stroke-linecap="round" stroke-linejoin="round" /><path d="M5.05,150.04999999999998L8.45,146.48" stroke="#dcdcdc" stroke-width="0.85" fill="none" stroke-linecap="round" stroke-linejoin="round" /><path d="M2.8,147.7a2,2 0 0 1 2.5,-1.8" stroke="#d4d4d4" stroke-width="0.5" fill="none" stroke-linecap="round" stroke-linejoin="round" /><path d="M9.1,152.79999999999998L10.2,152.79999999999998L10.2,151.7Z" stroke="none" stroke-width="0.7" fill="#8a8a8a" stroke-linecap="round" stroke-linejoin="round" /><path d="M2.8,159.4L6.1,155.9L8.2,157.9L5.0,161.20000000000002Z" stroke="none" stroke-width="0.7" fill="#d4d4d4" stroke-linecap="round" stroke-linejoin="round" /><path d="M3.5999999999999996,161.20000000000002L8.6,161.20000000000002" stroke="#d4d4d4" stroke-width="0.4" fill="none" stroke-linecap="round" stroke-linejoin="round" /><path d="M9.1,162.0L10.2,162.0L10.2,160.9Z" stroke="none" stroke-width="0.7" fill="#8a8a8a" stroke-linecap="round" stroke-linejoin="round" /><rect x="2.5999999999999996" y="166.10000000000002" width="6" height="4.4" fill="none" stroke="#d4d4d4" stroke-width="0.6"/><rect x="3.1999999999999997" y="166.70000000000002" width="2.6" height="3.2" fill="#d4d4d4"/><path d="M9.1,171.9L10.2,171.9L10.2,170.8Z" stroke="none" stroke-width="0.7" fill="#8a8a8a" stroke-linecap="round" stroke-linejoin="round" /><path d="M5.6,175.5C6.8,177.3 7.8,178.5 7.8,179.5A2.2,2.2 0 0 1 3.3999999999999995,179.5C3.3999999999999995,178.5 4.3999999999999995,177.3 5.6,175.5Z" stroke="none" stroke-width="0.7" fill="#d4d4d4" stroke-linecap="round" stroke-linejoin="round" /><path d="M9.1,182.1L10.2,182.1L10.2,181.0Z" stroke="none" stroke-width="0.7" fill="#8a8a8a" stroke-linecap="round" stroke-linejoin="round" /><circle cx="6.199999999999999" cy="187.4" r="1.9" fill="none" stroke="#d4d4d4" stroke-width="0.9"/><path d="M4.8999999999999995,189.0L2.8,191.4" stroke="#d4d4d4" stroke-width="0.9" fill="none" stroke-linecap="round" stroke-linejoin="round" /><path d="M9.1,192.0L10.2,192.0L10.2,190.9Z" stroke="none" stroke-width="0.7" fill="#8a8a8a" stroke-linecap="round" stroke-linejoin="round" /><path d="M2.9999999999999996,201.0L3.5999999999999996,197.4L6.6,195.6L8.399999999999999,197.4L6.6,200.4Z" stroke="#d4d4d4" stroke-width="0.7" fill="none" stroke-linecap="round" stroke-linejoin="round" /><path d="M9.1,202.0L10.2,202.0L10.2,200.9Z" stroke="none" stroke-width="0.7" fill="#8a8a8a" stroke-linecap="round" stroke-linejoin="round" /><path d="M2.9999999999999996,205.0L8.2,205.0M5.6,205.0L5.6,210.4M4.6,210.4L6.6,210.4" stroke="#d4d4d4" stroke-width="0.9" fill="none" stroke-linecap="round" stroke-linejoin="round" /><path d="M9.1,211.2L10.2,211.2L10.2,210.1Z" stroke="none" stroke-width="0.7" fill="#8a8a8a" stroke-linecap="round" stroke-linejoin="round" /><path d="M4.1,214.4L4.1,219.9L5.6,218.4L6.8,220.4L7.6,219.9L6.3999999999999995,218.0L8.2,217.70000000000002Z" stroke="none" stroke-width="0.7" fill="#d4d4d4" stroke-linecap="round" stroke-linejoin="round" /><path d="M9.1,221.0L10.2,221.0L10.2,219.9Z" stroke="none" stroke-width="0.7" fill="#8a8a8a" stroke-linecap="round" stroke-linejoin="round" /><rect x="2.8" y="225.39999999999998" width="5.6" height="4.6" fill="none" stroke="#d4d4d4" stroke-width="0.7"/><path d="M9.1,231.29999999999998L10.2,231.29999999999998L10.2,230.2Z" stroke="none" stroke-width="0.7" fill="#8a8a8a" stroke-linecap="round" stroke-linejoin="round" /><path d="M3.3,238L3.3,236.4L4.199999999999999,235.4L5.199999999999999,235.2L6.199999999999999,235.4L7.199999999999999,235.8L8.0,237L8.0,239.2L6.6,241L4.199999999999999,241L2.5999999999999996,238.8Z" stroke="none" stroke-width="0.7" fill="#d4d4d4" stroke-linecap="round" stroke-linejoin="round" /><path d="M9.1,241.6L10.2,241.6L10.2,240.5Z" stroke="none" stroke-width="0.7" fill="#8a8a8a" stroke-linecap="round" stroke-linejoin="round" /><circle cx="5.0" cy="247.0" r="2" fill="none" stroke="#d4d4d4" stroke-width="0.8"/><path d="M6.3999999999999995,248.5L8.399999999999999,250.60000000000002" stroke="#d4d4d4" stroke-width="1.0" fill="none" stroke-linecap="round" stroke-linejoin="round" /><path d="M9.1,251.4L10.2,251.4L10.2,250.3Z" stroke="none" stroke-width="0.7" fill="#8a8a8a" stroke-linecap="round" stroke-linejoin="round" /><circle cx="3.3999999999999995" cy="258" r="0.6" fill="#d4d4d4"/><circle cx="5.6" cy="258" r="0.6" fill="#d4d4d4"/><circle cx="7.8" cy="258" r="0.6" fill="#d4d4d4"/><path d="M1,268L1,266L3,266" stroke="#cfcfcf" stroke-width="0.5" fill="none" stroke-linecap="round" stroke-linejoin="round" /><rect x="0.6" y="266.6" width="2" height="1.8" fill="#cfcfcf"/><path d="M8,265.5a2,2 0 0 1 2,2" stroke="#cfcfcf" stroke-width="0.6" fill="none" stroke-linecap="round" stroke-linejoin="round" /><rect x="4.2" y="275" width="6.8" height="6.7" fill="#efe3ad" stroke="#2b2b2b" stroke-width="0.3"/><rect x="0.7" y="271.4" width="5.6" height="5.9" fill="#000" stroke="#aaa" stroke-width="0.3"/><rect x="2.8" y="286.59999999999997" width="5.6" height="4.6" fill="none" stroke="#d4d4d4" stroke-width="0.6"/><circle cx="5.6" cy="288.9" r="1.4" fill="#d4d4d4"/><rect x="2.9999999999999996" y="297.09999999999997" width="4.6" height="4" fill="none" stroke="#d4d4d4" stroke-width="0.6"/><rect x="4.3999999999999995" y="295.9" width="4.4" height="3.8" fill="#363636" stroke="#d4d4d4" stroke-width="0.6"/><rect x="0.8" y="37.7" width="0.8" height="0.8" fill="#888"/><rect x="2.2" y="37.7" width="0.8" height="0.8" fill="#888"/><path d="M631.425,49.925L632.55,48.65" stroke="#e8e8e8" stroke-width="1.35" fill="none" stroke-linecap="round" stroke-linejoin="round" /><path d="M632.55,48.65L635.55,45.5" stroke="#e8e8e8" stroke-width="0.75" fill="none" stroke-linecap="round" stroke-linejoin="round" /><path d="M631.425,58.724999999999994L632.55,57.449999999999996" stroke="#e8e8e8" stroke-width="1.35" fill="none" stroke-linecap="round" stroke-linejoin="round" /><path d="M632.55,57.449999999999996L635.55,54.3" stroke="#e8e8e8" stroke-width="0.75" fill="none" stroke-linecap="round" stroke-linejoin="round" /><path d="M631.425,67.525L632.55,66.25" stroke="#e8e8e8" stroke-width="1.35" fill="none" stroke-linecap="round" stroke-linejoin="round" /><path d="M632.55,66.25L635.55,63.1" stroke="#e8e8e8" stroke-width="0.75" fill="none" stroke-linecap="round" stroke-linejoin="round" /><path d="M631.425,76.32500000000002L632.55,75.05000000000001" stroke="#e8e8e8" stroke-width="1.35" fill="none" stroke-linecap="round" stroke-linejoin="round" /><path d="M632.55,75.05000000000001L635.55,71.9" stroke="#e8e8e8" stroke-width="0.75" fill="none" stroke-linecap="round" stroke-linejoin="round" /><path d="M631.425,85.12500000000001L632.55,83.85000000000001" stroke="#e8e8e8" stroke-width="1.35" fill="none" stroke-linecap="round" stroke-linejoin="round" /><path d="M632.55,83.85000000000001L635.55,80.7" stroke="#e8e8e8" stroke-width="0.75" fill="none" stroke-linecap="round" stroke-linejoin="round" /><path d="M631.425,93.92500000000001L632.55,92.65" stroke="#e8e8e8" stroke-width="1.35" fill="none" stroke-linecap="round" stroke-linejoin="round" /><path d="M632.55,92.65L635.55,89.5" stroke="#e8e8e8" stroke-width="0.75" fill="none" stroke-linecap="round" stroke-linejoin="round" /><path d="M631.425,102.72500000000002L632.55,101.45000000000002" stroke="#e8e8e8" stroke-width="1.35" fill="none" stroke-linecap="round" stroke-linejoin="round" /><path d="M632.55,101.45000000000002L635.55,98.30000000000001" stroke="#e8e8e8" stroke-width="0.75" fill="none" stroke-linecap="round" stroke-linejoin="round" /><path d="M631.425,111.52500000000002L632.55,110.25000000000001" stroke="#e8e8e8" stroke-width="1.35" fill="none" stroke-linecap="round" stroke-linejoin="round" /><path d="M632.55,110.25000000000001L635.55,107.10000000000001" stroke="#e8e8e8" stroke-width="0.75" fill="none" stroke-linecap="round" stroke-linejoin="round" /><path d="M631.425,120.32500000000002L632.55,119.05000000000001" stroke="#e8e8e8" stroke-width="1.35" fill="none" stroke-linecap="round" stroke-linejoin="round" /><path d="M632.55,119.05000000000001L635.55,115.9" stroke="#e8e8e8" stroke-width="0.75" fill="none" stroke-linecap="round" stroke-linejoin="round" /><path d="M631.425,129.125L632.55,127.85000000000001" stroke="#e8e8e8" stroke-width="1.35" fill="none" stroke-linecap="round" stroke-linejoin="round" /><path d="M632.55,127.85000000000001L635.55,124.7" stroke="#e8e8e8" stroke-width="0.75" fill="none" stroke-linecap="round" stroke-linejoin="round" /><path d="M702.5,138.6L706.7,138.6L706.7,136.4L704.6,134.6L702.5,136.4Z" stroke="none" stroke-width="0.7" fill="#cfcfcf" stroke-linecap="round" stroke-linejoin="round" /><circle cx="704.6" cy="135.5" r="1.3" fill="#cfcfcf"/><rect x="714.2" y="135.2" width="4.4" height="3.4" rx="0.5" fill="#cfcfcf"/><circle cx="716.4" cy="136.9" r="0.9" fill="#383838"/><path d="M725,135.6L728.6,135.6M725.5,135.6L725.8,139L727.8,139L728.1,135.6M726.2,135L727.4,135" stroke="#cfcfcf" stroke-width="0.6" fill="none" stroke-linecap="round" stroke-linejoin="round" /><circle cx="624.4" cy="160.2" r="1.3" fill="none" stroke="#cfcfcf" stroke-width="0.6"/><path d="M625.3,161.1L626.4,162.2" stroke="#cfcfcf" stroke-width="0.6" fill="none" stroke-linecap="round" stroke-linejoin="round" /><path d="M649.3,160.25L650.3,161.35000000000002L651.3,160.25" stroke="#aaa" stroke-width="0.55" fill="none" stroke-linecap="round" stroke-linejoin="round" /><path d="M665.6,170.35L666.6,171.45000000000002L667.6,170.35" stroke="#aaa" stroke-width="0.55" fill="none" stroke-linecap="round" stroke-linejoin="round" /><path d="M702.8,170.54999999999998L703.8,171.65L704.8,170.54999999999998" stroke="#aaa" stroke-width="0.55" fill="none" stroke-linecap="round" stroke-linejoin="round" /><path d="M702.8,181.35L703.8,182.45000000000002L704.8,181.35" stroke="#aaa" stroke-width="0.55" fill="none" stroke-linecap="round" stroke-linejoin="round" /><rect x="657.8" y="158.4" width="4.2" height="3.6" fill="none" stroke="#cfcfcf" stroke-width="0.55"/><path d="M658.2,161.6L659.6,160.2L661.4,161.6" stroke="#cfcfcf" stroke-width="0.5" fill="none" stroke-linecap="round" stroke-linejoin="round" /><circle cx="669" cy="160.3" r="1.9" fill="none" stroke="#dcdcdc" stroke-width="0.6"/><path d="M667.7,161.6A1.9,1.9 0 0 0 670.4,158.9Z" stroke="none" stroke-width="0.7" fill="#dcdcdc" stroke-linecap="round" stroke-linejoin="round" /><path d="M676.2,158.3L680,158.3M678.1,158.3L678.1,162.4" stroke="#dcdcdc" stroke-width="0.8" fill="none" stroke-linecap="round" stroke-linejoin="round" /><rect x="685.5" y="158.2" width="1.6" height="1.6" fill="#cfcfcf"/><rect x="687.7" y="158.2" width="1.6" height="1.6" fill="#cfcfcf"/><rect x="685.5" y="160.39999999999998" width="1.6" height="1.6" fill="#cfcfcf"/><rect x="687.7" y="160.39999999999998" width="1.6" height="1.6" fill="#cfcfcf"/><path d="M695,158.3L698,158.3L699,159.3L699,162.4L695,162.4Z" stroke="#cfcfcf" stroke-width="0.5" fill="none" stroke-linecap="round" stroke-linejoin="round" /><circle cx="706" cy="157.6" r="1.2" fill="#f0f0f0"/><rect x="632.6" y="180" width="3.6" height="3.6" fill="#888"/><rect x="632.6" y="180" width="1.8" height="1.8" fill="#e0e0e0"/><rect x="634.4" y="181.8" width="1.8" height="1.8" fill="#e0e0e0"/><path d="M641.6,183.32L642.5,182.29999999999998" stroke="#dcdcdc" stroke-width="1.08" fill="none" stroke-linecap="round" stroke-linejoin="round" /><path d="M642.5,182.29999999999998L644.9,179.78" stroke="#dcdcdc" stroke-width="0.6" fill="none" stroke-linecap="round" stroke-linejoin="round" /><path d="M651.3,179.4L651.3,184M649,181.7L653.6,181.7" stroke="#dcdcdc" stroke-width="0.6" fill="none" stroke-linecap="round" stroke-linejoin="round" /><path d="M657.6,180L661.4,180M658.2,179.4L658.2,183.6L661.4,183.6" stroke="#cfcfcf" stroke-width="0.5" fill="none" stroke-linecap="round" stroke-linejoin="round" /><rect x="666.4" y="181.2" width="3.2" height="2.6" fill="#dcdcdc"/><path d="M666.9,181.2L666.9,180.3A1.1,1.1 0 0 1 669.1,180.3L669.1,181.2" stroke="#dcdcdc" stroke-width="0.5" fill="none" stroke-linecap="round" stroke-linejoin="round" /><ellipse cx="624" cy="194.29999999999998" rx="1.9" ry="1.2" fill="none" stroke="#dcdcdc" stroke-width="0.55"/><circle cx="624" cy="194.29999999999998" r="0.6" fill="#dcdcdc"/><ellipse cx="624" cy="207.39999999999998" rx="1.9" ry="1.2" fill="none" stroke="#dcdcdc" stroke-width="0.55"/><circle cx="624" cy="207.39999999999998" r="0.6" fill="#dcdcdc"/><ellipse cx="624" cy="220.49999999999997" rx="1.9" ry="1.2" fill="none" stroke="#dcdcdc" stroke-width="0.55"/><circle cx="624" cy="220.49999999999997" r="0.6" fill="#dcdcdc"/><ellipse cx="624" cy="233.6" rx="1.9" ry="1.2" fill="none" stroke="#dcdcdc" stroke-width="0.55"/><circle cx="624" cy="233.6" r="0.6" fill="#dcdcdc"/><ellipse cx="624" cy="246.7" rx="1.9" ry="1.2" fill="none" stroke="#dcdcdc" stroke-width="0.55"/><circle cx="624" cy="246.7" r="0.6" fill="#dcdcdc"/><ellipse cx="624" cy="259.8" rx="1.9" ry="1.2" fill="none" stroke="#dcdcdc" stroke-width="0.55"/><circle cx="624" cy="259.8" r="0.6" fill="#dcdcdc"/><rect x="724.6" y="261.2" width="2.8" height="2.3" fill="none" stroke="#bbb" stroke-width="0.45"/><path d="M725.2,261.2L725.2,260.4A0.8,0.8 0 0 1 726.8,260.4L726.8,261.2" stroke="#bbb" stroke-width="0.45" fill="none" stroke-linecap="round" stroke-linejoin="round" /><path d="M664.3,387.4a1,0.8 0 1 0 1.6,0a1,0.8 0 1 0 -1.6,0M665.9,387.4a1,0.8 0 1 0 1.6,0a1,0.8 0 1 0 -1.6,0" stroke="#aaa" stroke-width="0.45" fill="none" stroke-linecap="round" stroke-linejoin="round" /><text x="674.2" y="388.9" font-size="4.3" font-style="italic" fill="#dcdcdc" font-family="Liberation Serif">fx</text><rect x="684.4" y="385.59999999999997" width="4.4" height="3.6" fill="#dcdcdc"/><circle cx="686.6" cy="387.4" r="1" fill="#383838"/><circle cx="696.7" cy="387.4" r="1.9" fill="none" stroke="#dcdcdc" stroke-width="0.6"/><path d="M695.4,388.7A1.9,1.9 0 0 0 698.1,386.09999999999997Z" stroke="none" stroke-width="0.7" fill="#dcdcdc" stroke-linecap="round" stroke-linejoin="round" /><path d="M704.8,389.2L709.2,389.2L709.2,386.4L707,386.4L706.4,385.59999999999997L704.8,385.59999999999997Z" stroke="none" stroke-width="0.7" fill="#dcdcdc" stroke-linecap="round" stroke-linejoin="round" /><rect x="715.3" y="385.4" width="4.2" height="4" fill="none" stroke="#dcdcdc" stroke-width="0.55"/><path d="M717.4,386.4L717.4,388.4M716.4,387.4L718.4,387.4" stroke="#dcdcdc" stroke-width="0.5" fill="none" stroke-linecap="round" stroke-linejoin="round" /><path d="M725.7,386.0L729.3,386.0M726.2,386.0L726.5,389.4L728.5,389.4L728.8,386.0M726.9,385.4L728.1,385.4" stroke="#dcdcdc" stroke-width="0.6" fill="none" stroke-linecap="round" stroke-linejoin="round" /><g fill="none" stroke="rgba(150,150,150,0.14)" stroke-width="2.6" stroke-linecap="butt"><path d="M627,376 C616,379 610,386 612,393 C614,399 622,401 628,398 C633,395 633,389 628,387 C623,385 619,389 621,392"/><path d="M606,396 L610,396 L612,401 L617,401 L619,404 L626,404 L628,401 L633,401 L635,397"/></g><text x="0" y="0" transform="translate(642.8,386) rotate(-90)" font-size="4.6" fill="rgba(150,150,150,0.14)" font-family="Liberation Sans" font-weight="bold">the</text><text x="0" y="0" transform="translate(645.3,389.6) scale(0.73,1)" font-size="21.5" fill="rgba(150,150,150,0.14)" font-family="Liberation Sans" font-weight="bold" letter-spacing="0.8">GNOMON</text><text x="0" y="0" transform="translate(638.8,402.8) scale(0.9,1)" font-size="15" fill="rgba(150,150,150,0.14)" font-family="Liberation Sans" font-weight="bold" letter-spacing="0.6">WORKSHOP</text><text transform="translate(18.6,55.10) rotate(-90)" font-size="3.3" fill="#8a8a8a" font-family="Liberation Sans">0</text><text transform="translate(18.6,77.95) rotate(-90)" font-size="3.3" fill="#8a8a8a" font-family="Liberation Sans">100</text><text transform="translate(18.6,97.00) rotate(-90)" font-size="3.3" fill="#8a8a8a" font-family="Liberation Sans">200</text><text transform="translate(18.6,116.05) rotate(-90)" font-size="3.3" fill="#8a8a8a" font-family="Liberation Sans">300</text><text transform="translate(18.6,135.10) rotate(-90)" font-size="3.3" fill="#8a8a8a" font-family="Liberation Sans">400</text><text transform="translate(18.6,154.15) rotate(-90)" font-size="3.3" fill="#8a8a8a" font-family="Liberation Sans">500</text><text transform="translate(18.6,173.20) rotate(-90)" font-size="3.3" fill="#8a8a8a" font-family="Liberation Sans">600</text><text transform="translate(18.6,192.25) rotate(-90)" font-size="3.3" fill="#8a8a8a" font-family="Liberation Sans">700</text><text transform="translate(18.6,211.30) rotate(-90)" font-size="3.3" fill="#8a8a8a" font-family="Liberation Sans">800</text><text transform="translate(18.6,230.35) rotate(-90)" font-size="3.3" fill="#8a8a8a" font-family="Liberation Sans">900</text><text transform="translate(18.6,251.30) rotate(-90)" font-size="3.3" fill="#8a8a8a" font-family="Liberation Sans">1000</text><text transform="translate(18.6,270.35) rotate(-90)" font-size="3.3" fill="#8a8a8a" font-family="Liberation Sans">1100</text><text transform="translate(18.6,289.40) rotate(-90)" font-size="3.3" fill="#8a8a8a" font-family="Liberation Sans">1200</text><text transform="translate(18.6,308.45) rotate(-90)" font-size="3.3" fill="#8a8a8a" font-family="Liberation Sans">1300</text><text transform="translate(18.6,327.50) rotate(-90)" font-size="3.3" fill="#8a8a8a" font-family="Liberation Sans">1400</text><text transform="translate(18.6,346.55) rotate(-90)" font-size="3.3" fill="#8a8a8a" font-family="Liberation Sans">1500</text><text transform="translate(18.6,365.60) rotate(-90)" font-size="3.3" fill="#8a8a8a" font-family="Liberation Sans">1600</text><text transform="translate(18.6,384.65) rotate(-90)" font-size="3.3" fill="#8a8a8a" font-family="Liberation Sans">1700</text></svg>
</body></html>
